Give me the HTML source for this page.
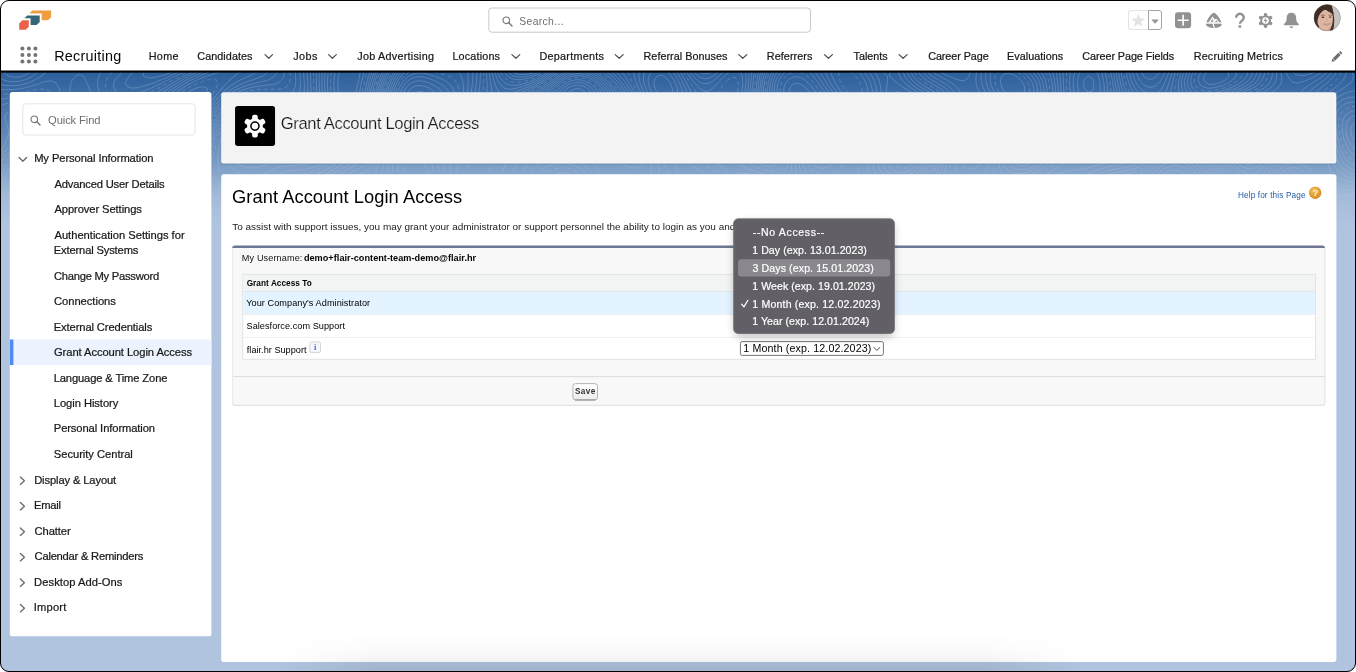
<!DOCTYPE html>
<html lang="en">
<head>
<meta charset="utf-8">
<title>Grant Account Login Access</title>
<style>
html,body{margin:0;padding:0;background:#fff;}
body{width:1356px;height:672px;overflow:hidden;font-family:"Liberation Sans",Arial,Helvetica,sans-serif;}
#frame{will-change:transform;position:relative;width:1356px;height:672px;overflow:hidden;background:#fff;}
#frame *{box-sizing:border-box;}
.abs{position:absolute;}
.t{position:absolute;white-space:nowrap;line-height:1;display:block;}
.t.sf{-webkit-text-stroke:0.22px currentColor;}
.t.dd{-webkit-text-stroke:0.2px currentColor;}
.t.lite{-webkit-text-stroke:0.18px #f3f3f3;}
#border{left:0;top:0;width:1356px;height:672px;border:1px solid #000;border-radius:9px;box-shadow:0 0 0 30px #fff;pointer-events:none;}
</style>
</head>
<body>
<div id="frame">
<svg class="abs" style="left:0;top:0" width="1356" height="672" viewBox="0 0 1356 672">
<defs>
<linearGradient id="bgg" x1="0" y1="0" x2="0" y2="1">
<stop offset="0" stop-color="#2c5f9c"/><stop offset="0.6" stop-color="#7b9cc4"/><stop offset="0.8" stop-color="#a2bad8"/><stop offset="1" stop-color="#b0c4df"/>
</linearGradient>
<linearGradient id="savg" x1="0" y1="0" x2="0" y2="1"><stop offset="0" stop-color="#fff"/><stop offset="1" stop-color="#ebebeb"/></linearGradient>
<radialGradient id="hg" cx="40%" cy="30%" r="70%"><stop offset="0" stop-color="#f7c362"/><stop offset="1" stop-color="#d98c1f"/></radialGradient>
<linearGradient id="fade" x1="0" y1="0" x2="0" y2="1"><stop offset="0" stop-color="#fff" stop-opacity="1"/><stop offset="0.55" stop-color="#fff" stop-opacity="0.8"/><stop offset="1" stop-color="#fff" stop-opacity="0"/></linearGradient>
<mask id="topomask"><rect x="0" y="72" width="1356" height="165" fill="url(#fade)"/></mask>
</defs>
<rect x="0" y="72" width="1356" height="600" fill="#b0c4df"/>
<rect x="0" y="72" width="1356" height="153.5" fill="url(#bgg)"/>
<g mask="url(#topomask)" fill="none" stroke="#cfe0f5" stroke-width="0.8" stroke-opacity="0.3"><path d="M339.6 72.0 L338.6 76.0 L338.0 80.0 L337.8 84.0 L338.0 88.0 L338.6 92.0 M355.9 92.0 L356.0 91.7 L356.9 88.0 L357.7 84.0 L358.6 80.0 L359.5 76.0 L360.0 73.4 L360.2 72.0 M335.2 72.0 L334.4 76.0 L334.0 80.0 L333.8 84.0 L334.0 88.0 L334.4 92.0 M359.5 92.0 L360.0 90.1 L360.4 88.0 L361.2 84.0 L362.1 80.0 L363.1 76.0 L364.0 72.1 L364.0 72.0 M328.3 72.0 L328.0 74.1 L327.8 76.0 L327.5 80.0 L327.5 84.0 L327.6 88.0 L327.9 92.0 M364.7 92.0 L365.5 88.0 L366.4 84.0 L367.4 80.0 L368.0 77.9 L368.5 76.0 L369.5 72.0 M660.0 75.2 L658.0 76.0 L656.0 77.2 L654.4 80.0 L654.0 84.0 L654.9 88.0 L656.0 90.3 L657.1 92.0 M672.5 92.0 L672.2 88.0 L672.0 87.4 L670.6 84.0 L668.3 80.0 L668.0 79.6 L664.0 76.1 L663.5 76.0 L660.0 75.2 M1168.0 171.5 L1167.0 172.0 L1164.0 174.1 M1184.0 174.1 L1182.2 172.0 L1180.0 170.8 L1176.0 169.9 L1172.0 170.2 L1168.0 171.5 M325.2 72.0 L324.8 76.0 L324.7 80.0 L324.7 84.0 L324.8 88.0 L325.1 92.0 M366.9 92.0 L367.7 88.0 L368.0 86.8 L368.6 84.0 L369.6 80.0 L370.7 76.0 L371.9 72.0 M522.3 72.0 L524.0 72.1 L525.2 72.0 M651.2 72.0 L648.9 76.0 L648.1 80.0 L648.5 84.0 L649.7 88.0 L651.5 92.0 L652.0 92.8 M678.0 92.0 L677.3 88.0 L676.0 84.3 L675.9 84.0 L673.8 80.0 L672.0 76.9 L671.3 76.0 L668.1 72.0 M1088.0 75.9 L1087.8 76.0 L1084.1 80.0 L1084.0 80.4 L1083.6 84.0 L1084.0 87.0 L1084.3 88.0 L1087.7 92.0 L1088.0 92.2 L1089.5 92.0 L1092.0 91.3 L1093.5 88.0 L1093.7 84.0 L1092.9 80.0 L1092.0 78.0 L1088.3 76.0 L1088.0 75.9 M1168.0 166.8 L1165.4 168.0 L1164.0 168.8 L1160.0 171.6 L1159.4 172.0 M1189.7 172.0 L1188.0 170.2 L1185.2 168.0 L1184.0 167.4 L1180.0 166.0 L1176.0 165.4 L1172.0 165.7 L1168.0 166.8 M322.3 72.0 L322.0 76.0 L321.9 80.0 L322.0 84.0 L322.1 88.0 L322.3 92.0 M236.0 163.3 L237.3 164.0 L240.0 165.4 L244.0 166.8 L248.0 167.6 L252.0 167.9 L256.0 167.6 L260.0 166.8 L264.0 165.6 L268.0 164.2 L268.5 164.0 M368.9 92.0 L369.7 88.0 L370.6 84.0 L371.7 80.0 L372.0 78.9 L372.8 76.0 L374.1 72.0 M512.6 72.0 L516.0 73.7 L520.0 74.5 L524.0 74.5 L528.0 73.9 L532.0 72.9 L534.4 72.0 M644.7 72.0 L644.0 74.1 L643.5 76.0 L643.5 80.0 L644.0 82.9 L644.2 84.0 L645.6 88.0 L647.5 92.0 L648.0 92.9 M682.5 92.0 L681.4 88.0 L680.0 84.3 L679.9 84.0 L677.9 80.0 L676.0 76.5 L675.7 76.0 L673.2 72.0 M1080.2 72.0 L1080.0 72.3 L1078.4 76.0 L1077.6 80.0 L1077.4 84.0 L1077.8 88.0 L1078.7 92.0 M1099.9 92.0 L1100.0 90.8 L1100.2 88.0 L1100.1 84.0 L1100.0 83.3 L1099.5 80.0 L1098.4 76.0 L1096.9 72.0 M1356.0 122.2 L1353.0 124.0 L1352.0 125.3 L1351.1 128.0 L1350.9 132.0 L1351.7 136.0 L1352.0 136.8 L1354.3 140.0 L1356.0 141.6 M1168.0 163.1 L1165.7 164.0 L1164.0 164.8 L1160.0 167.2 L1158.9 168.0 L1156.0 170.3 L1153.8 172.0 L1152.0 173.6 M1196.0 174.3 L1195.0 172.0 L1192.0 168.5 L1191.6 168.0 L1188.0 165.6 L1185.1 164.0 L1184.0 163.5 M10.4 176.0 L10.4 180.0 M319.3 72.0 L319.1 76.0 L319.1 80.0 L319.3 84.0 L319.4 88.0 L319.6 92.0 M226.8 164.0 L228.0 165.4 L231.1 168.0 L232.0 168.7 L236.0 171.1 L237.9 172.0 L240.0 173.1 L244.0 174.9 M264.0 173.9 L267.3 172.0 L268.0 171.7 L272.0 169.9 L276.0 168.3 L276.9 168.0 L280.0 167.1 L284.0 166.3 L288.0 165.8 L292.0 165.4 L296.0 165.2 L300.0 164.9 L304.0 164.5 L307.3 164.0 L308.0 163.9 M370.7 92.0 L371.6 88.0 L372.0 86.2 L372.5 84.0 L373.6 80.0 L374.8 76.0 L376.0 72.5 L376.2 72.0 M507.9 72.0 L508.0 72.1 L512.0 75.3 L513.8 76.0 L516.0 76.7 L520.0 77.1 L524.0 76.9 L528.0 76.1 L528.4 76.0 L532.0 74.9 L536.0 73.3 L538.8 72.0 M639.1 72.0 L638.8 76.0 L639.3 80.0 L640.0 82.5 L640.4 84.0 L642.0 88.0 L643.9 92.0 L644.0 92.1 M686.6 92.0 L685.3 88.0 L684.0 85.1 L683.5 84.0 L681.5 80.0 L680.0 77.3 L679.3 76.0 L677.0 72.0 M1074.9 72.0 L1073.8 76.0 L1073.3 80.0 L1073.2 84.0 L1073.5 88.0 L1074.1 92.0 M1104.3 92.0 L1104.3 88.0 L1104.0 84.0 L1104.0 84.0 L1103.4 80.0 L1102.7 76.0 L1101.6 72.0 M1207.2 72.0 L1204.0 75.8 L1203.9 76.0 L1203.6 80.0 L1204.0 80.7 L1208.0 84.0 L1208.0 84.0 L1212.0 84.4 L1215.6 84.0 L1216.0 83.9 L1220.0 82.5 L1224.0 80.7 L1225.3 80.0 L1228.0 77.0 L1228.9 76.0 L1228.3 72.0 M1356.0 115.7 L1354.3 116.0 L1352.0 116.7 L1348.0 120.0 L1348.0 120.1 L1346.4 124.0 L1345.9 128.0 L1346.1 132.0 L1346.8 136.0 L1348.0 140.0 L1348.0 140.0 L1350.2 144.0 L1352.0 146.6 L1353.9 148.0 L1356.0 149.2 M9.1 168.0 L8.0 169.7 L6.9 172.0 L5.9 176.0 L5.8 180.0 L6.7 184.0 L8.0 186.9 L8.8 188.0 M211.6 200.0 L212.0 196.8 L212.1 196.0 L212.0 194.5 L211.8 192.0 M1200.0 173.0 L1199.6 172.0 L1196.4 168.0 L1196.0 167.7 L1192.0 164.5 L1191.3 164.0 M1160.0 163.4 L1159.2 164.0 L1156.0 166.2 L1153.7 168.0 L1152.0 169.3 L1148.4 172.0 L1148.0 172.3 M316.4 72.0 L316.3 76.0 L316.4 80.0 L316.5 84.0 L316.7 88.0 L316.9 92.0 M221.8 136.0 L220.4 140.0 L220.0 141.7 L219.4 144.0 L218.6 148.0 L218.1 152.0 L217.8 156.0 L217.8 160.0 L218.0 164.0 L218.6 168.0 L219.7 172.0 L220.0 172.9 M280.0 173.7 L284.0 172.3 L285.0 172.0 L288.0 171.3 L292.0 170.7 L296.0 170.2 L300.0 169.8 L304.0 169.3 L308.0 168.6 L310.6 168.0 L312.0 167.6 L316.0 166.3 L320.0 164.6 L321.3 164.0 M372.6 92.0 L373.4 88.0 L374.3 84.0 L375.5 80.0 L376.0 78.4 L376.8 76.0 L378.1 72.0 M504.2 72.0 L507.5 76.0 L508.0 76.5 L512.0 78.7 L516.0 79.6 L520.0 79.6 L524.0 79.1 L528.0 78.2 L532.0 76.9 L534.2 76.0 L536.0 75.3 L540.0 73.3 L542.3 72.0 M633.6 72.0 L634.2 76.0 L635.3 80.0 L636.0 81.8 L636.8 84.0 L638.6 88.0 L640.0 90.7 L640.7 92.0 M690.8 92.0 L689.2 88.0 L688.0 85.8 L687.1 84.0 L684.9 80.0 L684.0 78.5 L682.6 76.0 L680.4 72.0 M1070.6 72.0 L1069.9 76.0 L1069.6 80.0 L1069.7 84.0 L1069.9 88.0 L1070.4 92.0 M1107.9 92.0 L1107.6 88.0 L1107.2 84.0 L1106.6 80.0 L1106.0 76.0 L1105.2 72.0 M1201.1 72.0 L1200.0 73.8 L1198.8 76.0 L1198.2 80.0 L1199.5 84.0 L1200.0 84.6 L1204.0 87.2 L1207.3 88.0 L1208.0 88.1 L1212.0 88.0 L1212.2 88.0 L1216.0 87.3 L1220.0 86.2 L1224.0 84.8 L1226.2 84.0 L1228.0 83.0 L1232.0 80.5 L1232.7 80.0 L1236.0 76.0 L1236.0 76.0 L1236.4 72.0 M1356.0 110.8 L1352.0 111.2 L1350.0 112.0 L1348.0 113.0 L1344.9 116.0 L1344.0 117.5 L1342.9 120.0 L1342.2 124.0 L1342.1 128.0 L1342.5 132.0 L1343.2 136.0 L1344.0 139.3 L1344.2 140.0 L1345.7 144.0 L1347.6 148.0 L1348.0 148.8 L1350.7 152.0 L1352.0 153.3 L1356.0 155.2 M8.0 163.3 L7.5 164.0 L4.9 168.0 L4.0 170.1 L3.3 172.0 L2.5 176.0 L2.4 180.0 L3.0 184.0 L4.0 187.3 L4.3 188.0 L7.0 192.0 L8.0 193.1 M210.8 212.0 L212.0 209.6 L212.8 208.0 L214.8 204.0 L216.0 201.0 L216.5 200.0 L218.0 196.0 L219.0 192.0 L219.5 188.0 L219.4 184.0 L218.6 180.0 L216.0 177.1 L213.2 176.0 L212.0 175.8 M1204.0 172.7 L1203.7 172.0 L1200.5 168.0 L1200.0 167.5 L1196.0 164.0 L1196.0 164.0 M1153.9 164.0 L1152.0 165.4 L1148.6 168.0 L1148.0 168.4 L1144.0 171.1 L1142.5 172.0 L1140.0 173.4 M310.3 72.0 L310.4 76.0 L310.6 80.0 L310.8 84.0 L311.0 88.0 L311.0 92.0 M220.1 128.0 L220.0 128.2 L218.1 132.0 L216.3 136.0 L216.0 136.9 L214.7 140.0 L213.2 144.0 L212.0 147.2 L211.7 148.0 M497.9 72.0 L499.4 76.0 L500.0 77.3 L501.8 80.0 L504.0 82.4 L506.8 84.0 L508.0 84.6 L512.0 85.4 L516.0 85.3 L520.0 84.7 L522.6 84.0 L524.0 83.7 L528.0 82.4 L532.0 80.8 L533.8 80.0 L536.0 79.0 L540.0 77.0 L541.7 76.0 L544.0 74.7 L548.0 72.2 L548.2 72.0 M621.8 72.0 L624.0 74.7 L624.8 76.0 L627.4 80.0 L628.0 80.9 L629.8 84.0 L632.0 87.8 L632.1 88.0 L634.5 92.0 M741.7 92.0 L742.4 88.0 L742.7 84.0 L742.6 80.0 L742.1 76.0 L740.8 72.0 M729.3 72.0 L728.0 72.9 L724.7 76.0 L724.0 76.6 L720.7 80.0 L720.0 80.8 L716.8 84.0 L716.0 85.0 L712.7 88.0 L712.0 88.9 L708.0 91.4 L704.0 91.1 L700.0 88.3 L699.8 88.0 L696.0 84.6 L695.6 84.0 L692.1 80.0 L692.0 79.8 L689.3 76.0 L688.0 74.0 L686.8 72.0 M1063.2 72.0 L1063.1 76.0 L1063.3 80.0 L1063.5 84.0 L1063.7 88.0 L1064.0 92.0 L1064.0 92.0 M1114.1 92.0 L1113.5 88.0 L1112.9 84.0 L1112.3 80.0 L1112.0 78.2 L1111.7 76.0 L1111.0 72.0 M1193.3 72.0 L1192.0 74.8 L1191.5 76.0 L1190.8 80.0 L1191.0 84.0 L1192.0 86.9 L1192.5 88.0 L1196.0 91.4 L1197.2 92.0 M1216.0 92.4 L1217.6 92.0 L1220.0 91.3 L1224.0 90.1 L1228.0 88.8 L1230.2 88.0 L1232.0 87.2 L1236.0 85.3 L1238.7 84.0 L1240.0 83.0 L1244.0 80.0 L1244.0 80.0 L1246.8 76.0 L1247.8 72.0 M1356.0 101.9 L1352.0 101.9 L1348.0 102.7 L1344.9 104.0 L1344.0 104.4 L1340.0 107.5 L1339.5 108.0 L1336.9 112.0 L1336.0 114.7 L1335.6 116.0 M1335.7 128.0 L1336.0 130.1 L1336.3 132.0 L1337.1 136.0 L1338.1 140.0 L1339.1 144.0 L1340.0 147.0 L1340.3 148.0 L1341.8 152.0 L1343.6 156.0 L1344.0 156.8 L1346.4 160.0 L1348.0 161.8 L1351.4 164.0 L1352.0 164.3 L1356.0 165.2 M0.0 193.9 L1.1 196.0 L4.0 200.0 L4.0 200.0 L8.0 202.7 M9.5 152.0 L8.0 153.2 L5.5 156.0 L4.0 157.7 L2.5 160.0 L0.2 164.0 L0.0 164.5 M4.0 240.0 L1.7 236.0 L0.0 233.4 M212.0 220.8 L212.4 220.0 L214.7 216.0 L216.0 213.9 L217.4 212.0 L220.0 208.6 L220.6 208.0 M316.0 174.1 L320.0 172.6 L321.5 172.0 L324.0 170.8 L328.0 168.8 L329.4 168.0 L332.0 166.4 L336.0 164.0 L336.0 164.0 M376.0 92.0 L376.0 92.0 L376.8 88.0 L377.8 84.0 L379.1 80.0 L380.0 77.3 L380.5 76.0 L382.0 72.0 M1212.0 173.5 L1211.2 172.0 L1208.0 168.0 L1208.0 168.0 L1204.0 164.2 L1203.8 164.0 M1144.0 163.5 L1143.3 164.0 L1140.0 166.0 L1136.0 168.0 L1136.0 168.0 L1132.0 169.4 L1128.0 170.4 L1124.0 171.1 L1120.0 171.8 L1118.6 172.0 L1116.0 172.4 L1112.0 173.2 L1108.0 174.3 M307.0 72.0 L307.2 76.0 L307.5 80.0 L307.8 84.0 L307.9 88.0 L307.8 92.0 M220.0 123.8 L219.9 124.0 L217.6 128.0 L216.0 131.2 L215.6 132.0 L213.7 136.0 L212.0 139.9 L212.0 140.0 M495.0 72.0 L496.0 76.0 L496.0 76.1 L497.6 80.0 L499.8 84.0 L500.0 84.3 L504.0 87.8 L504.6 88.0 L508.0 89.1 L512.0 89.1 L516.0 88.4 L517.2 88.0 L520.0 87.3 L524.0 86.1 L528.0 84.5 L529.2 84.0 L532.0 82.8 L536.0 80.9 L537.7 80.0 L540.0 78.8 L544.0 76.4 L544.7 76.0 L548.0 73.9 L550.9 72.0 M616.1 72.0 L620.0 75.8 L620.2 76.0 L623.5 80.0 L624.0 80.6 L626.4 84.0 L628.0 86.4 L629.0 88.0 L631.5 92.0 L632.0 92.8 M744.9 92.0 L745.4 88.0 L745.8 84.0 L746.0 80.0 L745.9 76.0 L745.6 72.0 M723.1 72.0 L720.0 75.1 L719.0 76.0 L716.0 78.8 L714.4 80.0 L712.0 81.8 L708.0 83.5 L704.0 83.7 L700.0 82.2 L697.1 80.0 L696.0 79.2 L693.2 76.0 L692.0 74.6 L690.2 72.0 M1059.7 72.0 L1059.9 76.0 L1060.0 76.6 L1060.3 80.0 L1060.6 84.0 L1060.9 88.0 L1061.1 92.0 M1117.1 92.0 L1116.2 88.0 L1116.0 86.7 L1115.5 84.0 L1114.8 80.0 L1114.2 76.0 L1113.6 72.0 M1190.1 72.0 L1188.5 76.0 L1188.0 78.3 L1187.7 80.0 L1187.6 84.0 L1188.0 85.8 L1188.6 88.0 L1191.2 92.0 L1192.0 92.7 M1224.0 92.3 L1225.1 92.0 L1228.0 91.0 L1232.0 89.6 L1236.0 88.1 L1236.2 88.0 L1240.0 86.1 L1244.0 84.0 L1244.0 84.0 L1248.0 80.8 L1248.9 80.0 L1251.5 76.0 L1252.0 73.9 L1252.4 72.0 M1356.0 97.1 L1352.0 97.1 L1348.0 97.8 L1344.0 99.2 L1342.5 100.0 L1340.0 101.5 L1337.0 104.0 L1336.0 105.1 M1336.0 143.2 L1336.2 144.0 L1337.2 148.0 L1338.4 152.0 L1339.7 156.0 L1340.0 156.7 L1341.6 160.0 L1344.0 163.7 L1344.3 164.0 L1348.0 167.3 L1349.5 168.0 L1352.0 169.1 L1356.0 169.7 M0.0 201.4 L2.0 204.0 L4.0 206.1 L8.0 207.5 M8.0 147.4 L7.5 148.0 L4.2 152.0 L4.0 152.2 L1.5 156.0 L0.0 158.3 M6.5 240.0 L4.8 236.0 L4.0 234.2 L2.8 232.0 L0.2 228.0 L0.0 227.7 M211.2 228.0 L212.0 226.0 L212.9 224.0 L215.0 220.0 L216.0 218.3 L217.7 216.0 L220.0 213.0 L221.0 212.0 M324.0 174.5 L328.0 172.5 L328.9 172.0 L332.0 170.3 L336.0 168.0 L336.0 168.0 L340.0 165.6 L342.6 164.0 L344.0 163.1 M377.6 92.0 L378.5 88.0 L379.5 84.0 L380.0 82.6 L380.8 80.0 L382.3 76.0 L383.9 72.0 M1216.0 174.2 L1214.8 172.0 L1212.0 168.6 L1211.6 168.0 L1208.0 164.6 L1207.4 164.0 M1136.4 164.0 L1136.0 164.2 L1132.0 165.7 L1128.0 166.9 L1124.0 167.7 L1122.5 168.0 L1120.0 168.4 L1116.0 169.0 L1112.0 169.7 L1108.0 170.7 L1104.0 171.9 L1103.7 172.0 L1100.0 173.4 M143.0 72.0 L143.4 76.0 L144.0 76.5 L148.0 77.9 L152.0 77.8 L156.0 77.2 L160.0 76.3 L160.8 76.0 L164.0 75.0 L168.0 73.6 L172.0 72.1 L172.2 72.0 M303.5 72.0 L303.8 76.0 L304.0 78.3 L304.1 80.0 L304.3 84.0 L304.4 88.0 L304.1 92.0 L304.0 92.8 M220.0 119.9 L219.9 120.0 L217.4 124.0 L216.0 126.5 L215.2 128.0 L213.1 132.0 L212.0 134.3 L211.2 136.0 M492.1 72.0 L492.8 76.0 L493.8 80.0 L495.1 84.0 L496.0 86.7 L496.7 88.0 L499.1 92.0 M515.1 92.0 L516.0 91.7 L520.0 90.2 L524.0 88.5 L525.1 88.0 L528.0 86.8 L532.0 84.9 L533.6 84.0 L536.0 82.8 L540.0 80.6 L541.0 80.0 L544.0 78.2 L547.5 76.0 L548.0 75.7 L552.0 73.0 L553.5 72.0 M611.1 72.0 L612.0 72.7 L615.8 76.0 L616.0 76.2 L619.7 80.0 L620.0 80.4 L622.9 84.0 L624.0 85.4 L625.8 88.0 L628.0 91.2 L628.5 92.0 M747.5 92.0 L748.0 88.6 L748.1 88.0 L748.4 84.0 L748.7 80.0 L748.8 76.0 L748.9 72.0 M717.9 72.0 L716.0 73.8 L712.9 76.0 L712.0 76.7 L708.0 78.4 L704.0 78.6 L700.0 77.2 L698.4 76.0 L696.0 74.2 L694.1 72.0 M1056.1 72.0 L1056.8 76.0 L1057.3 80.0 L1057.8 84.0 L1058.1 88.0 L1058.3 92.0 M1120.0 92.1 L1120.0 92.0 L1119.0 88.0 L1118.1 84.0 L1117.4 80.0 L1116.7 76.0 L1116.2 72.0 M1187.1 72.0 L1185.6 76.0 L1184.7 80.0 L1184.5 84.0 L1185.1 88.0 L1186.7 92.0 M1231.4 92.0 L1232.0 91.8 L1236.0 90.3 L1240.0 88.8 L1241.9 88.0 L1244.0 86.9 L1248.0 84.7 L1249.1 84.0 L1252.0 81.4 L1253.5 80.0 L1255.8 76.0 L1256.0 75.3 L1256.7 72.0 M1356.0 91.1 L1352.0 91.3 L1349.4 92.0 L1348.0 92.3 L1344.0 93.8 L1340.0 95.9 L1339.8 96.0 L1336.0 98.6 M1336.0 155.8 L1336.1 156.0 L1337.3 160.0 L1339.2 164.0 L1340.0 165.3 L1342.1 168.0 L1344.0 169.8 L1347.5 172.0 L1348.0 172.2 L1352.0 173.5 L1356.0 173.9 M1296.0 174.8 L1292.0 174.0 M9.0 240.0 L8.0 237.0 L7.6 236.0 L6.2 232.0 L4.8 228.0 L4.0 225.0 L3.5 224.0 L2.0 220.0 L0.7 216.0 L4.0 215.2 L8.0 213.5 M8.0 111.6 L7.4 112.0 L5.1 116.0 L5.3 120.0 L6.6 124.0 L7.8 128.0 L8.0 129.0 L8.6 132.0 L8.1 136.0 L8.0 136.2 L6.8 140.0 L4.7 144.0 L4.0 145.0 L2.4 148.0 L0.0 152.0 L0.0 152.1 M211.9 232.0 L212.0 231.6 L213.3 228.0 L215.2 224.0 L216.0 222.6 L217.6 220.0 L220.0 216.8 L220.8 216.0 M332.0 174.0 L335.7 172.0 L336.0 171.8 L340.0 169.6 L342.8 168.0 L344.0 167.3 L348.0 165.0 L349.8 164.0 M379.3 92.0 L380.0 88.7 L380.2 88.0 L381.3 84.0 L382.6 80.0 L384.0 76.2 L384.1 76.0 L385.8 72.0 M1220.0 174.8 L1218.3 172.0 L1216.0 169.2 L1215.0 168.0 L1212.0 165.1 L1210.8 164.0 M1124.0 164.0 L1123.8 164.0 L1120.0 164.6 L1116.0 165.3 L1112.0 166.0 L1108.0 166.9 L1104.0 167.9 L1103.7 168.0 L1100.0 169.1 L1096.0 170.6 L1092.6 172.0 L1092.0 172.3 L1088.0 174.2 M133.0 72.0 L132.0 73.2 L129.3 76.0 L128.0 77.9 L126.4 80.0 L125.4 84.0 L128.0 87.0 L131.3 88.0 L132.0 88.1 L133.4 88.0 L136.0 87.8 L140.0 87.0 L144.0 85.9 L148.0 84.8 L150.4 84.0 L152.0 83.5 L156.0 81.9 L160.0 80.4 L160.9 80.0 L164.0 78.6 L168.0 76.9 L169.8 76.0 L172.0 75.0 L176.0 73.2 L178.4 72.0 M299.6 72.0 L300.0 75.8 L300.0 76.0 L300.3 80.0 L300.4 84.0 L300.3 88.0 L300.0 89.8 L299.5 92.0 M220.2 116.0 L220.0 116.3 L217.5 120.0 L216.0 122.4 L215.0 124.0 L212.8 128.0 L212.0 129.5 M489.3 72.0 L489.8 76.0 L490.3 80.0 L490.9 84.0 L491.5 88.0 L491.9 92.0 M522.3 92.0 L524.0 91.2 L528.0 89.1 L530.0 88.0 L532.0 87.0 L536.0 84.8 L537.3 84.0 L540.0 82.5 L544.0 80.0 L544.0 80.0 L548.0 77.5 L550.1 76.0 L552.0 74.8 L556.0 72.1 L556.2 72.0 M606.7 72.0 L608.0 73.0 L611.8 76.0 L612.0 76.2 L616.0 80.0 L616.0 80.0 L619.6 84.0 L620.0 84.5 L622.7 88.0 L624.0 89.8 L625.5 92.0 M749.8 92.0 L750.3 88.0 L750.7 84.0 L751.0 80.0 L751.4 76.0 L751.7 72.0 M711.7 72.0 L708.0 73.6 L704.0 73.8 L700.0 72.4 L699.5 72.0 M1052.5 72.0 L1053.6 76.0 L1054.4 80.0 L1054.9 84.0 L1055.3 88.0 L1055.5 92.0 M1123.0 92.0 L1121.7 88.0 L1120.7 84.0 L1120.0 80.7 L1119.9 80.0 L1119.2 76.0 L1118.6 72.0 M1184.2 72.0 L1184.0 72.5 L1182.8 76.0 L1181.9 80.0 L1181.5 84.0 L1181.7 88.0 L1182.7 92.0 M1236.0 92.5 L1237.4 92.0 L1240.0 91.0 L1244.0 89.5 L1247.5 88.0 L1248.0 87.7 L1252.0 85.3 L1254.0 84.0 L1256.0 82.1 L1257.9 80.0 L1260.0 76.0 L1260.0 75.9 L1260.8 72.0 M1352.3 72.0 L1353.3 76.0 L1352.9 80.0 L1352.0 81.0 L1349.6 84.0 L1348.0 84.9 L1344.0 87.6 L1343.5 88.0 L1340.0 90.1 L1337.2 92.0 L1336.0 92.8 M1334.2 164.0 L1336.0 167.8 L1336.1 168.0 L1339.3 172.0 L1340.0 172.6 L1344.0 175.2 L1345.7 176.0 L1348.0 176.8 L1352.0 177.7 L1356.0 177.9 M962.7 164.0 L964.0 166.2 L966.8 168.0 L968.0 168.6 L972.0 168.7 L974.3 168.0 L976.0 167.5 L980.0 164.8 L980.7 164.0 M0.0 131.0 L0.3 132.0 L0.9 136.0 L0.6 140.0 L0.0 142.0 M1292.0 167.6 L1289.9 168.0 L1288.0 168.5 L1284.0 170.9 L1282.8 172.0 M1304.0 172.0 L1304.0 172.0 L1300.0 169.3 L1296.6 168.0 L1296.0 167.8 L1292.0 167.6 M10.3 236.0 L9.3 232.0 L8.7 228.0 L8.7 224.0 L9.8 220.0 M8.0 103.2 L4.8 104.0 L4.0 104.3 L0.0 106.3 M211.7 240.0 L212.0 238.6 L212.6 236.0 L213.8 232.0 L215.4 228.0 L216.0 226.8 L217.6 224.0 L220.0 220.4 L220.4 220.0 M340.0 173.4 L342.8 172.0 L344.0 171.3 L348.0 169.3 L350.6 168.0 L352.0 167.2 L356.0 165.0 L357.7 164.0 M380.9 92.0 L381.8 88.0 L383.0 84.0 L384.0 80.9 L384.3 80.0 L385.9 76.0 L387.7 72.0 M1221.8 172.0 L1220.0 169.9 L1218.4 168.0 L1216.0 165.7 L1214.2 164.0 M1104.0 163.5 L1102.2 164.0 L1100.0 164.5 L1096.0 165.6 L1092.0 166.7 L1088.0 167.9 L1087.4 168.0 L1084.0 168.9 L1080.0 169.7 L1076.0 170.2 L1072.0 170.6 L1068.0 171.1 L1064.0 172.0 L1064.0 172.0 L1060.0 173.2 L1056.0 174.6 M122.9 72.0 L120.0 74.5 L118.3 76.0 L116.0 78.8 L115.1 80.0 L113.7 84.0 L113.9 88.0 L116.0 91.8 L116.2 92.0 M140.0 92.4 L141.2 92.0 L144.0 91.0 L148.0 89.4 L151.4 88.0 L152.0 87.8 L156.0 85.9 L160.0 84.0 L160.1 84.0 L164.0 82.0 L167.9 80.0 L168.0 80.0 L172.0 77.9 L175.6 76.0 L176.0 75.8 L180.0 73.8 L183.5 72.0 M295.3 72.0 L295.6 76.0 L295.8 80.0 L295.7 84.0 L294.8 88.0 L292.6 92.0 L292.0 92.6 M268.0 92.7 L264.0 92.5 L260.0 92.4 L256.0 92.7 M220.7 112.0 L220.0 112.9 L217.7 116.0 L216.0 118.5 L215.0 120.0 L212.6 124.0 L212.0 125.1 M486.5 72.0 L486.7 76.0 L486.9 80.0 L487.2 84.0 L487.2 88.0 L487.0 92.0 M527.4 92.0 L528.0 91.7 L532.0 89.3 L534.0 88.0 L536.0 86.9 L540.0 84.4 L540.6 84.0 L544.0 81.9 L546.8 80.0 L548.0 79.2 L552.0 76.5 L552.8 76.0 L556.0 73.8 L558.9 72.0 M602.6 72.0 L604.0 73.0 L608.0 76.0 L608.0 76.0 L612.0 79.5 L612.5 80.0 L616.0 83.7 L616.3 84.0 L619.6 88.0 L620.0 88.6 L622.5 92.0 M673.3 164.0 L676.0 167.5 L676.4 168.0 L678.2 172.0 M704.0 172.5 L703.2 172.0 L700.0 170.4 L696.0 168.2 L695.6 168.0 L692.0 165.7 L690.1 164.0 M752.0 92.0 L752.0 91.9 L752.4 88.0 L752.8 84.0 L753.2 80.0 L753.6 76.0 L754.1 72.0 M1048.8 72.0 L1050.3 76.0 L1051.4 80.0 L1052.0 83.4 L1052.1 84.0 L1052.5 88.0 L1052.7 92.0 M1062.3 164.0 L1060.0 165.3 L1056.3 168.0 L1056.0 168.2 L1052.0 170.9 L1050.4 172.0 L1048.0 173.3 M1181.4 72.0 L1180.0 76.0 L1180.0 76.0 L1179.0 80.0 L1178.5 84.0 L1178.4 88.0 L1178.9 92.0 M1243.5 92.0 L1244.0 91.8 L1248.0 90.2 L1252.0 88.5 L1253.0 88.0 L1256.0 86.1 L1258.8 84.0 L1260.0 82.7 L1262.2 80.0 L1264.0 76.1 L1264.0 76.0 L1264.7 72.0 M1346.2 72.0 L1345.4 76.0 L1344.0 78.8 L1343.3 80.0 L1340.0 83.6 L1339.6 84.0 L1336.0 86.9 L1334.7 88.0 L1332.0 90.0 L1329.6 92.0 M1328.6 164.0 L1329.2 168.0 L1331.1 172.0 L1332.0 173.0 M1336.0 176.5 L1340.0 178.7 L1343.2 180.0 L1344.0 180.3 L1348.0 181.2 L1352.0 181.8 L1356.0 181.8 M955.4 164.0 L955.5 168.0 L955.9 172.0 L956.0 172.4 M984.0 173.9 L984.9 172.0 L986.8 168.0 L988.0 165.4 L988.5 164.0 M760.0 163.6 L760.9 164.0 L764.0 165.1 L768.0 166.0 L772.0 165.9 L776.0 164.4 L776.4 164.0 M1288.0 163.8 L1287.5 164.0 L1284.0 165.7 L1280.8 168.0 L1280.0 168.8 L1277.3 172.0 L1276.0 174.1 M1313.1 172.0 L1312.0 171.1 L1308.5 168.0 L1308.0 167.7 L1304.0 165.5 L1300.4 164.0 L1300.0 163.9 L1296.0 163.1 L1292.0 163.0 L1288.0 163.8 M8.0 98.1 L4.0 98.7 L0.0 99.4 M213.4 240.0 L214.4 236.0 L215.8 232.0 L216.0 231.4 L217.6 228.0 L220.0 224.0 L220.0 224.0 M348.0 173.6 L351.6 172.0 L352.0 171.8 L356.0 170.1 L360.0 168.1 L360.2 168.0 L364.0 165.6 L365.8 164.0 M382.6 92.0 L383.5 88.0 L384.0 86.2 L384.7 84.0 L386.1 80.0 L387.8 76.0 L388.0 75.5 L389.7 72.0 M1225.3 172.0 L1224.0 170.5 L1221.9 168.0 L1220.0 166.3 L1217.6 164.0 M1126.1 92.0 L1124.6 88.0 L1124.0 86.2 L1123.4 84.0 L1122.5 80.0 L1121.7 76.0 L1121.1 72.0 M101.2 72.0 L100.0 73.8 L98.7 76.0 L97.7 80.0 L97.6 84.0 L98.1 88.0 L99.3 92.0 M156.0 92.8 L157.4 92.0 L160.0 90.6 L164.0 88.3 L164.5 88.0 L168.0 85.9 L171.1 84.0 L172.0 83.5 L176.0 81.1 L177.7 80.0 L180.0 78.7 L184.0 76.5 L184.8 76.0 L188.0 74.4 L192.0 72.3 L192.6 72.0 M284.3 72.0 L284.0 74.2 L283.7 76.0 L281.8 80.0 L280.0 81.7 L276.0 83.7 L274.9 84.0 L272.0 84.5 L268.0 85.0 L264.0 85.5 L260.0 86.0 L256.0 86.6 L252.0 87.3 L249.5 88.0 L248.0 88.3 L244.0 89.5 L240.0 91.1 L238.3 92.0 M220.0 106.3 L218.6 108.0 L216.0 111.3 L215.5 112.0 L212.7 116.0 L212.0 117.1 M480.5 72.0 L480.4 76.0 L480.2 80.0 L480.0 83.2 L479.9 84.0 L479.5 88.0 L478.8 92.0 M457.9 164.0 L457.2 168.0 L456.7 172.0 M594.5 72.0 L596.0 72.8 L600.0 75.3 L600.9 76.0 L604.0 78.4 L605.9 80.0 L608.0 82.0 L610.0 84.0 L612.0 86.2 L613.5 88.0 L616.0 91.3 L616.6 92.0 M657.4 164.0 L658.8 168.0 L659.5 172.0 M726.3 172.0 L724.6 168.0 L724.0 167.7 L720.0 165.6 L716.3 164.0 L716.0 163.9 M739.2 164.0 L740.0 164.5 L744.0 166.9 L746.0 168.0 L748.0 168.7 L752.0 170.1 L756.0 171.6 L757.2 172.0 L760.0 172.9 L764.0 174.1 M784.0 172.8 L784.6 172.0 L786.8 168.0 L787.9 164.0 L788.0 163.6 M756.0 92.0 L756.0 91.6 L756.3 88.0 L756.7 84.0 L757.2 80.0 L757.8 76.0 L758.5 72.0 M940.2 72.0 L944.0 73.9 L948.0 75.8 L948.5 76.0 L952.0 77.5 L956.0 79.0 L959.1 80.0 L960.0 80.4 L964.0 80.8 L965.5 80.0 L968.0 78.1 L969.0 76.0 L970.6 72.0 M1041.0 72.0 L1043.5 76.0 L1044.0 77.2 L1045.2 80.0 L1046.2 84.0 L1046.8 88.0 L1047.0 92.0 M1047.0 164.0 L1044.0 166.9 L1042.9 168.0 L1040.0 170.0 L1036.5 172.0 L1036.0 172.2 L1032.0 173.8 M1004.0 173.7 L1001.9 172.0 L1000.0 168.9 L999.6 168.0 L998.9 164.0 M946.8 164.0 L945.7 168.0 L944.4 172.0 L944.0 173.2 M1175.6 72.0 L1174.2 76.0 L1173.0 80.0 L1172.2 84.0 L1172.0 85.0 L1171.4 88.0 L1170.8 92.0 M1133.3 92.0 L1132.0 90.0 L1131.0 88.0 L1129.3 84.0 L1128.0 80.1 L1128.0 80.0 L1127.0 76.0 L1126.3 72.0 M1336.5 72.0 L1336.0 73.0 L1334.1 76.0 L1332.0 78.4 L1330.4 80.0 L1328.0 82.1 L1325.7 84.0 L1324.0 85.3 L1320.6 88.0 L1320.0 88.5 L1316.2 92.0 L1316.0 92.3 M1276.0 163.0 L1275.0 164.0 L1272.0 167.3 L1271.4 168.0 L1268.5 172.0 L1268.0 173.0 M1232.9 172.0 L1232.0 171.1 L1229.1 168.0 L1228.0 167.1 L1224.6 164.0 L1224.0 163.6 M1256.0 92.1 L1256.4 92.0 L1260.0 90.3 L1264.0 88.1 L1264.1 88.0 L1268.0 84.6 L1268.6 84.0 L1271.1 80.0 L1272.0 76.7 L1272.2 76.0 L1272.4 72.0 M60.3 92.0 L60.0 90.9 L59.0 88.0 L56.7 84.0 L56.0 83.1 L52.0 81.0 L48.0 81.1 L44.0 82.0 L40.0 83.3 L38.0 84.0 L36.0 84.6 L32.0 85.9 L28.0 87.0 L24.0 88.0 L24.0 88.0 L20.0 88.7 L16.0 89.3 L12.0 89.6 L8.0 89.7 L4.0 89.7 L0.0 89.4 M216.9 240.0 L218.1 236.0 L219.7 232.0 L220.0 231.5 M374.9 172.0 L376.0 170.3 L377.1 168.0 L378.6 164.0 M386.0 92.0 L386.9 88.0 L388.0 84.6 L388.2 84.0 L389.8 80.0 L391.7 76.0 L392.0 75.3 L393.9 72.0 M502.7 172.0 L503.7 168.0 L504.0 167.5 L505.9 164.0 M535.3 92.0 L536.0 91.6 L540.0 88.7 L540.9 88.0 L544.0 85.9 L546.5 84.0 L548.0 83.0 L552.0 80.1 L552.2 80.0 L556.0 77.4 L558.1 76.0 L560.0 74.8 L564.0 72.5 L565.0 72.0 M1336.0 189.8 L1340.0 189.8 L1344.0 190.0 L1348.0 190.1 L1352.0 190.1 L1356.0 189.9 M46.3 72.0 L44.0 74.0 L41.8 76.0 L40.0 77.1 L36.0 79.5 L35.0 80.0 L32.0 81.4 L28.0 82.9 L24.4 84.0 L24.0 84.1 L20.0 85.0 L16.0 85.5 L12.0 85.7 L8.0 85.6 L4.0 85.2 L0.0 84.2 M277.0 72.0 L276.0 74.0 L274.7 76.0 L272.0 78.1 L268.2 80.0 L268.0 80.1 L264.0 81.1 L260.0 82.1 L256.0 83.0 L252.2 84.0 L252.0 84.0 L248.0 85.1 L244.0 86.4 L240.2 88.0 L240.0 88.1 L236.0 90.0 L232.8 92.0 L232.0 92.5 M220.0 103.0 L219.1 104.0 L216.0 107.8 L215.8 108.0 L212.9 112.0 L212.0 113.3 M477.0 72.0 L476.8 76.0 L476.6 80.0 L476.3 84.0 L476.0 86.1 L475.7 88.0 L475.1 92.0 M450.5 164.0 L450.2 168.0 L450.2 172.0 M589.9 72.0 L592.0 72.9 L596.0 75.1 L597.4 76.0 L600.0 77.9 L602.7 80.0 L604.0 81.2 L607.0 84.0 L608.0 85.1 L610.6 88.0 L612.0 89.9 L613.6 92.0 M650.7 164.0 L651.2 168.0 L650.5 172.0 M620.0 174.4 L616.0 174.1 M736.0 174.6 L740.0 173.3 L744.0 173.2 L748.0 173.6 L752.0 174.4 M790.7 172.0 L791.5 168.0 L791.9 164.0 M757.9 92.0 L758.2 88.0 L758.6 84.0 L759.1 80.0 L759.8 76.0 L760.0 75.1 L760.7 72.0 M932.9 72.0 L936.0 74.2 L939.0 76.0 L940.0 76.5 L944.0 78.6 L946.7 80.0 L948.0 80.8 L952.0 83.2 L953.3 84.0 L956.0 86.3 L957.8 88.0 L960.0 91.7 L960.2 92.0 M943.4 164.0 L942.1 168.0 L940.5 172.0 L940.0 173.2 M1036.9 72.0 L1039.9 76.0 L1040.0 76.3 L1041.9 80.0 L1043.2 84.0 L1043.9 88.0 L1044.0 90.9 L1044.0 92.0 L1044.0 92.7 M1041.8 164.0 L1040.0 165.6 L1037.1 168.0 L1036.0 168.7 L1032.0 170.6 L1028.3 172.0 L1028.0 172.1 L1024.0 172.9 L1020.0 173.3 L1016.0 173.1 L1012.0 172.4 L1011.0 172.0 L1008.0 170.3 L1005.5 168.0 L1004.0 164.8 L1003.7 164.0 M980.0 92.4 L979.6 92.0 L977.3 88.0 L976.2 84.0 L976.0 81.5 L975.9 80.0 L976.0 77.6 L976.1 76.0 L976.5 72.0 M1172.5 72.0 L1172.0 73.3 L1171.0 76.0 L1169.7 80.0 L1168.5 84.0 L1168.0 86.0 L1167.3 88.0 L1165.8 92.0 M1137.9 92.0 L1136.0 89.7 L1134.9 88.0 L1132.7 84.0 L1132.0 82.4 L1131.2 80.0 L1130.0 76.0 L1129.2 72.0 M1332.0 72.0 L1328.7 76.0 L1328.0 76.7 L1324.2 80.0 L1324.0 80.2 L1320.0 83.1 L1318.7 84.0 L1316.0 86.1 L1313.4 88.0 L1312.0 89.3 L1309.3 92.0 M1270.5 164.0 L1268.0 166.9 L1267.0 168.0 L1264.0 172.0 L1264.0 172.0 M1240.0 174.6 L1237.5 172.0 L1236.0 170.8 L1233.1 168.0 L1232.0 167.1 L1228.3 164.0 L1228.0 163.8 M1263.4 92.0 L1264.0 91.7 L1268.0 89.5 L1270.3 88.0 L1272.0 86.4 L1274.2 84.0 L1276.0 80.0 L1276.0 79.7 L1276.6 76.0 L1276.5 72.0 M1356.0 237.5 L1355.1 240.0 M69.6 92.0 L70.0 88.0 L70.8 84.0 L72.0 80.5 L72.3 80.0 L75.9 76.0 L76.0 75.9 L80.0 74.5 L82.6 76.0 L84.0 76.9 L85.4 80.0 L87.3 84.0 L88.0 85.3 L88.9 88.0 L90.6 92.0 M162.9 92.0 L164.0 91.3 L168.0 88.9 L169.3 88.0 L172.0 86.3 L175.6 84.0 L176.0 83.7 L180.0 81.3 L182.1 80.0 L184.0 78.9 L188.0 76.7 L189.3 76.0 L192.0 74.6 L196.0 72.6 L197.3 72.0 M218.6 240.0 L220.0 236.0 L220.0 235.9 M381.8 172.0 L382.8 168.0 L383.6 164.0 M387.7 92.0 L388.0 90.7 L388.7 88.0 L390.1 84.0 L391.7 80.0 L392.0 79.4 L393.8 76.0 L396.0 72.1 L396.1 72.0 M513.2 172.0 L514.9 168.0 L516.0 166.2 L517.4 164.0 M538.8 92.0 L540.0 91.2 L544.0 88.0 L544.0 88.0 L548.0 85.1 L549.3 84.0 L552.0 82.1 L554.9 80.0 L556.0 79.2 L560.0 76.6 L561.0 76.0 L564.0 74.3 L568.0 72.3 L568.9 72.0 M1336.0 196.2 L1337.0 196.0 L1340.0 195.6 L1344.0 195.2 L1348.0 195.0 L1352.0 194.8 L1356.0 194.5 M37.8 72.0 L36.0 73.5 L32.8 76.0 L32.0 76.5 L28.0 78.5 L24.3 80.0 L24.0 80.1 L20.0 81.1 L16.0 81.6 L12.0 81.7 L8.0 81.2 L4.0 80.1 L3.7 80.0 L0.0 77.4 M268.1 72.0 L268.0 72.1 L264.0 75.3 L262.9 76.0 L260.0 77.2 L256.0 78.7 L252.4 80.0 L252.0 80.1 L248.0 81.3 L244.0 82.8 L241.4 84.0 L240.0 84.5 L236.0 86.5 L233.7 88.0 L232.0 89.0 L228.0 92.0 L227.9 92.0 M220.0 99.4 L219.5 100.0 L216.1 104.0 L216.0 104.1 L213.0 108.0 L212.0 109.4 M473.0 72.0 L472.9 76.0 L472.7 80.0 L472.4 84.0 L472.0 87.3 L471.9 88.0 L471.3 92.0 M444.2 164.0 L444.3 168.0 L444.6 172.0 M582.6 72.0 L584.0 72.2 L588.0 73.3 L592.0 75.1 L593.7 76.0 L596.0 77.5 L599.5 80.0 L600.0 80.4 L604.0 84.0 L604.0 84.0 L607.6 88.0 L608.0 88.5 L610.7 92.0 M641.6 164.0 L640.0 166.5 L636.6 168.0 L636.0 168.1 L634.0 168.0 L632.0 167.8 L628.0 166.5 L624.0 164.5 L623.2 164.0 M542.1 92.0 L544.0 90.6 L547.0 88.0 L548.0 87.3 L552.0 84.1 L552.1 84.0 L556.0 81.2 L557.7 80.0 L560.0 78.5 L564.0 76.0 L564.1 76.0 L568.0 74.1 L572.0 72.7 L575.4 72.0 M927.3 72.0 L928.0 72.7 L932.0 76.0 L932.0 76.0 L936.0 78.4 L938.8 80.0 L940.0 80.7 L944.0 83.0 L945.7 84.0 L948.0 85.7 L950.8 88.0 L952.0 89.4 L954.1 92.0 M940.4 164.0 L940.0 165.0 L938.8 168.0 L937.1 172.0 L936.0 174.2 M796.0 174.5 L795.8 172.0 L795.7 168.0 L795.5 164.0 M759.7 92.0 L760.0 88.3 L760.0 88.0 L760.5 84.0 L761.0 80.0 L761.8 76.0 L762.8 72.0 M1032.7 72.0 L1036.0 75.9 L1036.1 76.0 L1038.4 80.0 L1040.0 84.0 L1040.0 84.1 L1040.8 88.0 L1040.9 92.0 M1036.4 164.0 L1036.0 164.3 L1032.0 167.0 L1029.9 168.0 L1028.0 168.7 L1024.0 169.5 L1020.0 169.8 L1016.0 169.2 L1012.9 168.0 L1012.0 167.4 L1008.9 164.0 M985.3 92.0 L984.0 89.3 L983.3 88.0 L981.9 84.0 L981.2 80.0 L981.1 76.0 L981.3 72.0 M1169.0 72.0 L1168.0 74.7 L1167.4 76.0 L1165.8 80.0 L1164.2 84.0 L1164.0 84.6 L1162.0 88.0 L1160.0 90.8 L1158.4 92.0 M1145.1 92.0 L1144.0 91.5 L1140.0 88.2 L1139.8 88.0 L1136.9 84.0 L1136.0 82.6 L1134.8 80.0 L1133.4 76.0 L1132.3 72.0 M1327.1 72.0 L1324.0 75.1 L1322.9 76.0 L1320.0 78.2 L1317.1 80.0 L1316.0 80.8 L1312.0 83.2 L1310.6 84.0 L1308.0 85.8 L1304.8 88.0 L1304.0 88.9 L1301.2 92.0 M1266.1 164.0 L1264.0 166.3 L1262.1 168.0 L1260.0 170.3 L1257.6 172.0 L1256.0 173.3 L1252.0 174.7 L1248.0 174.2 L1244.0 172.3 L1243.6 172.0 L1240.0 169.7 L1238.0 168.0 L1236.0 166.7 L1232.5 164.0 L1232.0 163.7 M1271.6 92.0 L1272.0 91.8 L1276.0 89.4 L1278.0 88.0 L1280.0 85.3 L1280.9 84.0 L1281.8 80.0 L1281.6 76.0 L1280.9 72.0 M1356.0 225.8 L1354.3 228.0 L1352.0 232.0 L1352.0 232.0 L1350.5 236.0 L1349.7 240.0 M167.8 92.0 L168.0 91.9 L172.0 89.2 L173.8 88.0 L176.0 86.6 L179.9 84.0 L180.0 84.0 L184.0 81.5 L186.5 80.0 L188.0 79.2 L192.0 77.1 L194.1 76.0 L196.0 75.1 L200.0 73.2 L202.6 72.0 M387.3 172.0 L387.9 168.0 L388.0 166.8 L388.3 164.0 M389.5 92.0 L390.6 88.0 L392.0 84.0 L392.0 83.9 L393.8 80.0 L396.0 76.0 L396.0 75.9 L398.7 72.0 M522.4 172.0 L524.0 169.3 L524.8 168.0 L528.0 164.0 L528.0 164.0 M592.0 163.2 L593.1 164.0 L596.0 166.9 L597.0 168.0 L599.4 172.0 L600.0 173.4 M1336.0 203.3 L1340.0 202.3 L1344.0 201.6 L1348.0 201.1 L1352.0 200.7 L1356.0 200.3 M30.2 72.0 L28.0 73.5 L24.0 75.6 L22.7 76.0 L20.0 76.8 L16.0 77.3 L12.0 77.0 L8.1 76.0 L8.0 76.0 L4.0 72.6 L3.5 72.0 M256.9 72.0 L256.0 72.5 L252.0 74.6 L249.4 76.0 L248.0 76.5 L244.0 78.2 L240.5 80.0 L240.0 80.2 L236.0 82.2 L233.3 84.0 L232.0 84.8 L228.0 87.9 L227.9 88.0 L224.0 91.4 L223.4 92.0 L220.0 95.5 L219.6 96.0 L216.1 100.0 L216.0 100.2 L213.0 104.0 L212.0 105.3 M468.0 72.0 L468.0 72.3 L468.1 76.0 L468.2 80.0 L468.1 84.0 L468.0 85.8 L467.9 88.0 L467.5 92.0 M438.2 164.0 L438.6 168.0 L439.3 172.0 M392.4 172.0 L392.7 168.0 L393.0 164.0 M391.4 92.0 L392.0 89.7 L392.5 88.0 L394.1 84.0 L396.0 80.0 L396.0 80.0 L398.5 76.0 L400.0 73.8 L401.5 72.0 M567.9 76.0 L568.0 76.0 L572.0 74.6 L576.0 73.8 L580.0 73.6 L584.0 74.2 L588.0 75.4 L589.3 76.0 L592.0 77.3 L596.0 79.9 L596.2 80.0 L600.0 83.2 L600.9 84.0 L604.0 87.3 L604.7 88.0 L607.7 92.0 L608.0 92.5 M545.4 92.0 L548.0 89.8 L550.0 88.0 L552.0 86.4 L555.0 84.0 L556.0 83.2 L560.0 80.4 L560.6 80.0 L564.0 78.0 L567.9 76.0 M922.6 72.0 L924.0 73.6 L926.4 76.0 L928.0 77.3 L932.0 80.0 L932.0 80.0 L936.0 82.3 L939.0 84.0 L940.0 84.6 L944.0 87.3 L944.9 88.0 L948.0 90.9 L949.0 92.0 M937.6 164.0 L936.0 167.6 L935.8 168.0 L933.9 172.0 M800.7 172.0 L800.0 169.1 L799.8 168.0 L799.2 164.0 M761.6 92.0 L761.9 88.0 L762.3 84.0 L763.0 80.0 L763.8 76.0 L764.0 75.2 L764.9 72.0 M1028.3 72.0 L1032.0 75.9 L1032.1 76.0 L1034.8 80.0 L1036.0 82.6 L1036.6 84.0 L1037.4 88.0 L1037.6 92.0 M990.0 92.0 L988.0 88.0 L988.0 88.0 L986.6 84.0 L985.8 80.0 L985.6 76.0 L985.9 72.0 M1165.0 72.0 L1164.0 74.4 L1163.1 76.0 L1161.0 80.0 L1160.0 81.7 L1157.9 84.0 L1156.0 85.8 L1152.0 87.3 L1148.0 87.0 L1144.0 85.0 L1143.0 84.0 L1140.0 80.8 L1139.5 80.0 L1137.6 76.0 L1136.0 72.0 M1321.7 72.0 L1320.0 73.4 L1316.0 75.9 L1315.9 76.0 L1312.0 78.0 L1308.0 79.8 L1307.3 80.0 L1304.0 81.3 L1300.0 82.5 L1296.0 83.1 L1292.0 82.0 L1290.5 80.0 L1288.0 76.6 L1287.8 76.0 L1286.0 72.0 M1260.9 164.0 L1260.0 164.9 L1256.0 167.5 L1254.5 168.0 L1252.0 168.9 L1248.0 168.8 L1245.6 168.0 L1244.0 167.5 L1240.0 165.5 L1237.6 164.0 L1236.0 163.1 M1029.1 164.0 L1028.0 164.5 L1024.0 165.5 L1020.0 165.4 L1016.0 164.1 L1015.9 164.0 M582.3 164.0 L584.0 164.9 L588.0 167.8 L588.2 168.0 L591.9 172.0 L592.0 172.2 M530.8 172.0 L532.0 170.4 L534.2 168.0 L536.0 166.3 L539.1 164.0 L540.0 163.4 M172.0 92.3 L172.4 92.0 L176.0 89.5 L178.2 88.0 L180.0 86.8 L184.0 84.2 L184.4 84.0 L188.0 81.9 L191.3 80.0 L192.0 79.6 L196.0 77.7 L199.5 76.0 L200.0 75.8 L204.0 74.1 L208.0 72.4 L209.1 72.0 M1336.0 212.4 L1338.6 212.0 L1340.0 211.8 L1344.0 211.7 L1346.5 212.0 L1348.0 212.6 L1349.8 216.0 L1348.7 220.0 L1348.0 221.7 L1347.2 224.0 L1346.0 228.0 L1345.2 232.0 L1344.6 236.0 L1344.4 240.0 M240.3 72.0 L240.0 72.2 L236.0 74.7 L234.9 76.0 L232.0 77.9 L230.1 80.0 L228.0 81.7 L226.0 84.0 L224.0 85.9 L222.2 88.0 L220.0 90.5 L218.8 92.0 L216.0 95.5 L215.6 96.0 L212.6 100.0 L212.0 100.8 M458.7 72.0 L460.0 73.3 L461.3 76.0 L462.5 80.0 L463.1 84.0 L463.4 88.0 L463.5 92.0 M432.1 164.0 L432.8 168.0 L433.7 172.0 M397.5 172.0 L397.8 168.0 L398.1 164.0 M393.4 92.0 L394.6 88.0 L396.0 84.5 L396.2 84.0 L398.5 80.0 L400.0 77.6 L401.3 76.0 L404.0 72.8 L404.9 72.0 M574.2 76.0 L576.0 75.7 L580.0 75.6 L582.8 76.0 L584.0 76.2 L588.0 77.6 L592.0 79.6 L592.6 80.0 L596.0 82.5 L597.8 84.0 L600.0 86.2 L601.7 88.0 L604.0 91.0 L604.7 92.0 M548.0 92.7 L548.7 92.0 L552.0 89.0 L553.0 88.0 L556.0 85.6 L557.9 84.0 L560.0 82.5 L563.8 80.0 L564.0 79.9 L568.0 77.9 L572.0 76.5 L574.2 76.0 M918.5 72.0 L920.0 74.2 L921.5 76.0 L924.0 78.3 L926.2 80.0 L928.0 81.2 L932.0 83.6 L932.7 84.0 L936.0 85.9 L939.3 88.0 L940.0 88.5 L944.0 91.8 L944.2 92.0 M934.9 164.0 L933.0 168.0 L932.0 169.9 L930.8 172.0 M808.0 174.6 L806.1 172.0 L804.2 168.0 L804.0 167.6 L803.0 164.0 M763.5 92.0 L763.8 88.0 L764.0 85.7 L764.2 84.0 L764.9 80.0 L765.9 76.0 L767.1 72.0 M1023.4 72.0 L1024.0 72.5 L1027.8 76.0 L1028.0 76.3 L1030.8 80.0 L1032.0 82.2 L1032.8 84.0 L1033.8 88.0 L1034.0 92.0 M994.4 92.0 L992.3 88.0 L992.0 87.1 L990.9 84.0 L990.2 80.0 L990.1 76.0 L990.6 72.0 M1159.8 72.0 L1156.7 76.0 L1156.0 76.9 L1152.0 79.2 L1148.0 79.1 L1144.0 76.5 L1143.7 76.0 L1141.2 72.0 M1314.5 72.0 L1312.0 73.2 L1308.0 74.6 L1304.0 75.4 L1300.0 75.5 L1296.0 74.4 L1292.7 72.0 M1252.1 164.0 L1252.0 164.0 L1248.0 164.2 L1246.9 164.0 L1244.0 163.4 M555.2 164.0 L556.0 163.9 L560.0 163.5 L564.0 163.6 L568.0 164.0 L568.0 164.0 L572.0 164.8 L576.0 166.1 L580.0 168.0 L580.0 168.0 L584.0 170.9 L585.2 172.0 M538.9 172.0 L540.0 170.9 L543.9 168.0 L544.0 167.9 L548.0 165.9 L552.0 164.6 L555.2 164.0 M176.0 92.7 L177.0 92.0 L180.0 90.0 L182.8 88.0 L184.0 87.3 L188.0 84.8 L189.4 84.0 L192.0 82.6 L196.0 80.5 L197.1 80.0 L200.0 78.8 L204.0 77.2 L207.1 76.0 L208.0 75.7 L212.0 74.5 L216.0 73.3 L219.9 72.0 M1336.0 229.1 L1337.0 232.0 L1337.7 236.0 L1338.3 240.0 M409.2 76.0 L412.0 74.4 L416.0 73.2 L420.0 72.9 L424.0 73.3 L428.0 74.2 L432.0 75.4 L433.7 76.0 L436.0 76.8 L440.0 78.4 L443.7 80.0 L444.0 80.1 L448.0 82.6 L449.6 84.0 L452.0 86.9 L452.7 88.0 L454.2 92.0 M398.0 92.0 L399.4 88.0 L400.0 86.7 L401.5 84.0 L404.0 80.5 L404.5 80.0 L408.0 76.7 L409.2 76.0 M830.6 72.0 L832.0 76.0 L832.0 76.0 L833.8 80.0 L835.8 84.0 L836.0 84.4 L838.4 88.0 L840.0 90.3 L841.3 92.0 M832.6 164.0 L832.0 164.5 L828.0 167.1 L824.8 168.0 L824.0 168.2 L820.0 168.1 L819.7 168.0 L816.0 166.5 L813.1 164.0 M767.5 92.0 L767.7 88.0 L768.0 85.0 L768.1 84.0 L769.0 80.0 L770.2 76.0 L771.7 72.0 M910.9 72.0 L912.0 74.2 L913.0 76.0 L916.0 79.6 L916.4 80.0 L920.0 83.0 L921.3 84.0 L924.0 85.7 L927.8 88.0 L928.0 88.1 L932.0 90.5 L934.3 92.0 M929.6 164.0 L928.0 166.9 L927.3 168.0 L924.7 172.0 L924.0 173.0 M868.0 172.5 L867.8 172.0 L867.4 168.0 L868.0 164.7 L868.1 164.0 M868.2 92.0 L868.0 91.1 L867.4 88.0 L866.2 84.0 L864.5 80.0 L864.0 79.1 L862.0 76.0 L860.0 73.4 L858.8 72.0 M1002.0 76.0 L1004.0 74.1 L1008.0 73.3 L1012.0 74.2 L1015.8 76.0 L1016.0 76.1 L1020.0 79.3 L1020.7 80.0 L1023.5 84.0 L1024.0 85.6 L1024.7 88.0 L1024.4 92.0 L1024.0 92.9 M1004.8 92.0 L1004.0 90.9 L1002.2 88.0 L1000.7 84.0 L1000.5 80.0 L1002.0 76.0 M575.0 80.0 L576.0 79.8 L580.0 79.8 L581.0 80.0 L584.0 80.7 L588.0 82.4 L590.6 84.0 L592.0 85.0 L595.3 88.0 L596.0 88.9 L598.4 92.0 M555.4 92.0 L556.0 91.4 L559.4 88.0 L560.0 87.5 L564.0 84.5 L564.7 84.0 L568.0 82.2 L572.0 80.6 L575.0 80.0 M556.0 173.9 L560.0 172.9 L564.0 172.6 L568.0 173.1 L572.0 174.4 M188.0 92.2 L188.3 92.0 L192.0 90.1 L196.0 88.2 L196.7 88.0 L200.0 87.1 L204.0 86.8 L206.9 88.0 L207.5 92.0 M825.1 72.0 L827.0 76.0 L828.0 78.0 L829.0 80.0 L831.3 84.0 L832.0 85.2 L833.9 88.0 L836.0 91.0 L836.7 92.0 M769.6 92.0 L769.8 88.0 L770.3 84.0 L771.2 80.0 L772.0 77.3 L772.5 76.0 L774.4 72.0 M907.1 72.0 L908.0 73.9 L909.0 76.0 L911.9 80.0 L912.0 80.1 L916.0 83.8 L916.2 84.0 L920.0 86.6 L922.2 88.0 L924.0 89.1 L928.0 91.4 L929.0 92.0 M926.9 164.0 L924.4 168.0 L924.0 168.7 L921.5 172.0 L920.0 173.6 M876.0 173.5 L874.8 172.0 L873.5 168.0 L873.5 164.0 M872.6 92.0 L872.0 88.6 L871.9 88.0 L870.8 84.0 L869.3 80.0 L868.0 77.6 L867.1 76.0 L864.3 72.0 M409.1 80.0 L412.0 78.2 L416.0 77.0 L420.0 76.7 L424.0 77.2 L428.0 78.3 L432.0 79.7 L432.8 80.0 L436.0 81.4 L440.0 83.5 L440.9 84.0 L444.0 86.3 L445.9 88.0 L448.0 90.8 L448.8 92.0 M400.6 92.0 L402.4 88.0 L404.0 85.2 L404.9 84.0 L408.0 80.8 L409.1 80.0 M569.6 84.0 L572.0 83.1 L576.0 82.3 L580.0 82.3 L584.0 83.3 L585.7 84.0 L588.0 85.3 L591.6 88.0 L592.0 88.5 L594.9 92.0 M559.1 92.0 L560.0 91.1 L563.1 88.0 L564.0 87.3 L568.0 84.8 L569.6 84.0 M820.1 72.0 L822.4 76.0 L824.0 78.7 L824.7 80.0 L827.1 84.0 L828.0 85.3 L829.8 88.0 L832.0 91.1 L832.7 92.0 M771.8 92.0 L771.9 88.0 L772.0 87.5 L772.5 84.0 L773.6 80.0 L775.1 76.0 L776.0 74.1 L777.3 72.0 M903.1 72.0 L904.0 74.3 L904.7 76.0 L907.3 80.0 L908.0 80.7 L911.2 84.0 L912.0 84.6 L916.0 87.6 L916.6 88.0 L920.0 90.0 L923.4 92.0 L924.0 92.3 M924.1 164.0 L924.0 164.1 L921.3 168.0 L920.0 169.7 L917.8 172.0 L916.0 173.6 M884.0 174.3 L881.3 172.0 L880.0 170.0 L879.0 168.0 L878.3 164.0 M876.7 92.0 L876.1 88.0 L876.0 87.5 L875.2 84.0 L873.9 80.0 L872.0 76.2 L871.9 76.0 L869.3 72.0 M409.8 84.0 L412.0 82.5 L416.0 81.1 L420.0 80.8 L424.0 81.4 L428.0 82.6 L431.4 84.0 L432.0 84.3 L436.0 86.6 L438.2 88.0 L440.0 89.6 L442.4 92.0 M403.8 92.0 L404.0 91.5 L406.0 88.0 L408.0 85.5 L409.8 84.0 M567.7 88.0 L568.0 87.8 L572.0 86.0 L576.0 85.0 L580.0 85.2 L584.0 86.4 L586.8 88.0 L588.0 89.0 L590.8 92.0 M563.3 92.0 L564.0 91.3 L567.7 88.0 M815.0 72.0 L816.0 73.2 L817.9 76.0 L820.0 79.2 L820.5 80.0 L823.1 84.0 L824.0 85.3 L825.8 88.0 L828.0 91.0 L828.8 92.0 M774.3 92.0 L774.4 88.0 L775.0 84.0 L776.0 80.3 L776.1 80.0 L778.0 76.0 L780.0 72.8 L780.6 72.0 M898.3 72.0 L899.7 76.0 L900.0 76.5 L902.0 80.0 L904.0 82.1 L905.8 84.0 L908.0 85.8 L910.9 88.0 L912.0 88.7 L916.0 91.1 L917.5 92.0 M921.0 164.0 L920.0 165.4 L917.8 168.0 L916.0 169.9 L913.3 172.0 L912.0 172.9 L908.0 174.7 M892.0 174.2 L888.0 172.1 L887.9 172.0 L884.3 168.0 L884.0 167.1 L883.0 164.0 M881.0 92.0 L880.7 88.0 L880.0 84.0 L880.0 83.8 L879.0 80.0 L877.3 76.0 L876.0 74.1 L874.7 72.0 M411.5 88.0 L412.0 87.6 L416.0 85.8 L420.0 85.5 L424.0 86.1 L428.0 87.6 L428.9 88.0 L432.0 89.9 L434.8 92.0 M408.0 92.0 L408.0 91.9 L411.5 88.0 M568.9 92.0 L572.0 90.0 L576.0 88.6 L580.0 88.9 L584.0 90.9 L585.4 92.0 M809.3 72.0 L812.0 74.7 L813.1 76.0 L816.0 79.8 L816.2 80.0 L818.9 84.0 L820.0 85.4 L821.8 88.0 L824.0 90.9 L824.8 92.0 M777.0 92.0 L777.1 88.0 L777.8 84.0 L779.2 80.0 L780.0 78.3 L781.5 76.0 L784.0 72.9 L785.0 72.0 M890.1 72.0 L889.1 76.0 L892.0 78.2 L893.0 80.0 L896.0 82.0 L898.1 84.0 L900.0 85.1 L904.0 87.9 L904.2 88.0 L908.0 90.3 L910.9 92.0 L912.0 92.6 M917.4 164.0 L916.0 165.7 L913.4 168.0 L912.0 169.1 L908.0 171.3 L905.3 172.0 L904.0 172.3 L900.0 172.4 L897.8 172.0 L896.0 171.6 L892.0 169.4 L890.3 168.0 L888.0 164.5 L887.8 164.0 M886.1 92.0 L886.6 88.0 L887.2 84.0 L887.7 80.0 L887.4 76.0 L884.0 73.2 L883.2 72.0 M417.4 92.0 L420.0 91.6 L422.2 92.0 L424.0 92.5 M416.0 92.4 L417.4 92.0 M788.0 80.0 L792.0 77.5 L796.0 76.7 L800.0 77.3 L804.0 79.3 L804.8 80.0 L808.0 82.8 L809.1 84.0 L812.0 87.3 L812.6 88.0 L815.8 92.0 L816.0 92.2 M783.7 92.0 L783.9 88.0 L784.0 87.5 L785.3 84.0 L788.0 80.0 L788.0 80.0 M793.6 84.0 L796.0 83.3 L800.0 83.9 L800.2 84.0 L804.0 86.4 L805.7 88.0 L808.0 90.2 L809.5 92.0 M789.0 92.0 L789.8 88.0 L792.0 84.8 L793.6 84.0"/><path stroke-dasharray="4 3" d="M331.6 72.0 L330.9 76.0 L330.6 80.0 L330.5 84.0 L330.6 88.0 L330.9 92.0 M362.3 92.0 L363.1 88.0 L364.0 84.5 L364.1 84.0 L365.0 80.0 L365.9 76.0 L366.9 72.0 M313.4 72.0 L313.4 76.0 L313.5 80.0 L313.7 84.0 L313.9 88.0 L314.0 92.0 M220.7 132.0 L220.0 133.6 L219.0 136.0 L217.5 140.0 L216.2 144.0 L216.0 144.9 L215.1 148.0 L214.0 152.0 L212.9 156.0 L212.0 158.8 L211.5 160.0 M500.9 72.0 L503.1 76.0 L504.0 77.2 L507.2 80.0 L508.0 80.5 L512.0 82.0 L516.0 82.4 L520.0 82.1 L524.0 81.4 L528.0 80.3 L528.8 80.0 L532.0 78.9 L536.0 77.2 L538.3 76.0 L540.0 75.1 L544.0 72.9 L545.4 72.0 M627.8 72.0 L628.0 72.4 L629.5 76.0 L631.3 80.0 L632.0 81.3 L633.3 84.0 L635.3 88.0 L636.0 89.2 L637.6 92.0 M696.0 92.8 L695.8 92.0 L693.6 88.0 L692.0 85.8 L691.0 84.0 L688.4 80.0 L688.0 79.5 L685.9 76.0 L684.0 72.7 L683.6 72.0 M1066.8 72.0 L1066.4 76.0 L1066.4 80.0 L1066.5 84.0 L1066.7 88.0 L1067.1 92.0 M1111.1 92.0 L1110.6 88.0 L1110.1 84.0 L1109.5 80.0 L1109.0 76.0 L1108.3 72.0 M1196.8 72.0 L1196.0 73.6 L1194.9 76.0 L1194.2 80.0 L1194.8 84.0 L1196.0 86.2 L1197.5 88.0 L1200.0 89.5 L1204.0 90.7 L1208.0 91.0 L1212.0 90.7 L1216.0 90.0 L1220.0 89.0 L1223.5 88.0 L1224.0 87.8 L1228.0 86.2 L1232.0 84.4 L1232.9 84.0 L1236.0 81.9 L1238.7 80.0 L1240.0 78.3 L1241.7 76.0 L1242.5 72.0 M728.0 79.7 L727.7 80.0 L724.0 83.7 L723.8 84.0 L721.2 88.0 L720.0 91.5 L719.8 92.0 L720.0 92.7 M737.3 92.0 L738.2 88.0 L738.3 84.0 L737.3 80.0 L736.0 77.9 L732.0 77.4 L728.0 79.7 M1356.0 106.4 L1352.0 106.5 L1348.0 107.6 L1347.2 108.0 L1344.0 110.1 L1342.2 112.0 L1340.0 115.6 L1339.8 116.0 L1338.8 120.0 L1338.6 124.0 L1338.8 128.0 L1339.3 132.0 L1340.0 135.9 L1340.0 136.0 L1341.0 140.0 L1342.2 144.0 L1343.6 148.0 L1344.0 148.9 L1345.6 152.0 L1348.0 155.7 L1348.3 156.0 L1352.0 159.1 L1354.5 160.0 L1356.0 160.4 M0.0 184.7 L0.9 188.0 L2.7 192.0 L4.0 194.2 L5.6 196.0 L8.0 198.0 M8.0 158.2 L6.5 160.0 L4.0 163.2 L3.5 164.0 L1.6 168.0 L0.3 172.0 L0.0 173.4 M1.2 240.0 L0.0 238.1 M211.8 216.0 L212.0 215.6 L214.1 212.0 L216.0 208.8 L216.6 208.0 L219.3 204.0 L220.0 202.7 M296.0 174.9 L300.0 174.2 L304.0 173.5 L308.0 172.7 L310.8 172.0 L312.0 171.7 L316.0 170.4 L320.0 168.9 L321.9 168.0 L324.0 166.9 L328.0 164.7 L329.3 164.0 M374.3 92.0 L375.1 88.0 L376.0 84.5 L376.1 84.0 L377.3 80.0 L378.6 76.0 L380.0 72.2 L380.1 72.0 M1208.0 173.0 L1207.5 172.0 L1204.4 168.0 L1204.0 167.6 L1200.1 164.0 L1200.0 163.9 M1148.8 164.0 L1148.0 164.6 L1144.0 167.4 L1143.0 168.0 L1140.0 169.7 L1136.0 171.5 L1134.5 172.0 L1132.0 172.8 L1128.0 173.7 L1124.0 174.4 L1120.0 175.0 M112.4 72.0 L112.0 72.4 L108.4 76.0 L108.0 76.7 L106.2 80.0 L105.4 84.0 L105.6 88.0 L106.9 92.0 M150.8 92.0 L152.0 91.4 L156.0 89.5 L158.8 88.0 L160.0 87.4 L164.0 85.2 L166.1 84.0 L168.0 82.9 L172.0 80.7 L173.1 80.0 L176.0 78.4 L180.0 76.2 L180.4 76.0 L184.0 74.1 L188.0 72.1 L188.1 72.0 M290.2 72.0 L290.3 76.0 L290.0 80.0 L288.9 84.0 L288.0 85.5 L284.9 88.0 L284.0 88.4 L280.0 89.1 L276.0 89.3 L272.0 89.2 L268.0 89.1 L264.0 89.2 L260.0 89.3 L256.0 89.7 L252.0 90.3 L248.0 91.2 L245.5 92.0 L244.0 92.4 M221.4 108.0 L220.0 109.6 L218.1 112.0 L216.0 114.9 L215.2 116.0 L212.6 120.0 L212.0 121.1 M483.6 72.0 L483.6 76.0 L483.6 80.0 L483.5 84.0 L483.3 88.0 L482.8 92.0 M469.3 164.0 L468.0 167.1 L467.7 168.0 L466.1 172.0 M598.6 72.0 L600.0 72.9 L604.0 75.7 L604.4 76.0 L608.0 79.0 L609.2 80.0 L612.0 82.8 L613.1 84.0 L616.0 87.4 L616.5 88.0 L619.5 92.0 L620.0 92.7 M664.0 164.0 L664.0 164.1 L666.2 168.0 L667.6 172.0 L668.0 174.7 M716.0 172.3 L715.8 172.0 L712.0 169.0 L710.4 168.0 L708.0 166.8 L704.0 164.7 L702.8 164.0 M750.6 164.0 L752.0 164.8 L756.0 167.0 L758.1 168.0 L760.0 168.7 L764.0 170.0 L768.0 170.9 L772.0 171.3 L776.0 170.8 L780.0 168.7 L780.7 168.0 L783.3 164.0 M754.0 92.0 L754.4 88.0 L754.8 84.0 L755.2 80.0 L755.8 76.0 L756.0 74.5 L756.4 72.0 M955.6 72.0 L956.0 72.1 L956.7 72.0 M1044.9 72.0 L1046.9 76.0 L1048.0 79.0 L1048.3 80.0 L1049.2 84.0 L1049.7 88.0 L1049.9 92.0 M1052.9 164.0 L1052.0 164.8 L1048.8 168.0 L1048.0 168.6 L1044.0 171.4 L1043.1 172.0 L1040.0 173.6 M994.1 172.0 L993.7 168.0 L994.0 164.0 M950.7 164.0 L949.9 168.0 L949.2 172.0 M1178.5 72.0 L1177.1 76.0 L1176.1 80.0 L1176.0 80.8 L1175.4 84.0 L1175.0 88.0 L1175.0 92.0 M1248.0 92.6 L1249.8 92.0 L1252.0 91.1 L1256.0 89.3 L1258.5 88.0 L1260.0 86.9 L1263.7 84.0 L1264.0 83.6 L1266.6 80.0 L1268.0 76.1 L1268.0 76.0 L1268.5 72.0 M1341.2 72.0 L1340.0 74.9 L1339.5 76.0 L1336.6 80.0 L1336.0 80.6 L1332.4 84.0 L1332.0 84.3 L1328.0 87.6 L1327.4 88.0 L1324.0 90.9 L1322.8 92.0 M1280.0 163.9 L1279.9 164.0 L1276.0 167.7 L1275.8 168.0 L1272.8 172.0 L1272.0 173.5 M1336.0 183.4 L1338.4 184.0 L1340.0 184.3 L1344.0 185.1 L1348.0 185.6 L1352.0 185.8 L1356.0 185.7 M50.4 92.0 L48.0 90.3 L44.0 89.2 L40.0 89.2 L36.0 89.8 L32.0 90.5 L28.0 91.2 L24.0 91.9 L23.6 92.0 L20.0 92.6 M8.0 93.8 L4.0 94.0 L0.0 94.3 M215.1 240.0 L216.0 236.9 L216.2 236.0 L217.8 232.0 L219.8 228.0 L220.0 227.6 M360.0 174.0 L364.0 172.3 L364.5 172.0 L368.0 169.7 L369.8 168.0 L372.0 165.3 L372.8 164.0 M384.2 92.0 L385.2 88.0 L386.4 84.0 L387.9 80.0 L388.0 79.8 L389.7 76.0 L391.7 72.0 M489.5 172.0 L489.0 168.0 L490.7 164.0 M531.6 92.0 L532.0 91.7 L536.0 89.2 L537.6 88.0 L540.0 86.5 L543.7 84.0 L544.0 83.8 L548.0 81.1 L549.5 80.0 L552.0 78.3 L555.4 76.0 L556.0 75.6 L560.0 73.0 L561.8 72.0 M1229.0 172.0 L1228.0 171.0 L1225.4 168.0 L1224.0 166.8 L1221.0 164.0 L1220.0 163.2 M1129.5 92.0 L1128.0 89.0 L1127.6 88.0 L1126.2 84.0 L1125.1 80.0 L1124.3 76.0 L1124.0 74.3 L1123.7 72.0 M434.5 72.0 L436.0 72.4 L440.0 73.5 L444.0 74.6 L448.0 75.9 L448.4 76.0 L452.0 77.8 L454.6 80.0 L456.0 81.8 L457.1 84.0 L458.4 88.0 L459.1 92.0 M424.6 164.0 L425.8 168.0 L427.2 172.0 L428.0 173.9 M403.6 172.0 L404.0 168.2 L404.0 168.0 L404.7 164.0 M395.5 92.0 L396.0 90.5 L396.9 88.0 L398.7 84.0 L400.0 81.8 L401.2 80.0 L404.0 76.5 L404.6 76.0 L408.0 73.0 L409.7 72.0 M838.8 72.0 L838.8 76.0 L839.7 80.0 L840.0 80.7 L841.6 84.0 L844.0 88.0 L844.0 88.0 L847.3 92.0 L848.0 92.8 M862.1 92.0 L861.7 88.0 L860.6 84.0 L860.0 82.6 L858.5 80.0 L856.0 76.6 L855.5 76.0 L852.0 72.8 L850.7 72.0 M914.6 72.0 L916.0 74.3 L917.1 76.0 L920.0 79.0 L921.1 80.0 L924.0 82.2 L926.8 84.0 L928.0 84.7 L932.0 87.1 L933.6 88.0 L936.0 89.5 L939.4 92.0 L940.0 92.5 M932.2 164.0 L932.0 164.4 L930.2 168.0 L928.0 171.7 L927.8 172.0 M858.0 172.0 L858.8 168.0 L860.0 165.4 L860.5 164.0 M842.8 164.0 L840.2 168.0 L840.0 168.2 L836.0 171.8 L835.7 172.0 L832.0 173.8 L828.0 174.8 M820.0 174.7 L816.0 173.5 L813.5 172.0 L812.0 170.9 L809.6 168.0 L808.0 165.6 L807.3 164.0 M765.5 92.0 L765.7 88.0 L766.2 84.0 L766.9 80.0 L767.9 76.0 L768.0 75.8 L769.4 72.0 M1017.5 72.0 L1020.0 73.8 L1022.7 76.0 L1024.0 77.3 L1026.3 80.0 L1028.0 82.8 L1028.7 84.0 L1029.7 88.0 L1029.8 92.0 M999.1 92.0 L996.8 88.0 L996.0 85.7 L995.4 84.0 L994.8 80.0 L995.0 76.0 L996.0 72.5 L996.2 72.0 M567.8 80.0 L568.0 79.9 L572.0 78.5 L576.0 77.7 L580.0 77.7 L584.0 78.4 L588.0 79.8 L588.3 80.0 L592.0 82.2 L594.4 84.0 L596.0 85.4 L598.6 88.0 L600.0 89.8 L601.6 92.0 M551.9 92.0 L552.0 91.9 L556.0 88.0 L556.0 88.0 L560.0 84.8 L561.1 84.0 L564.0 82.1 L567.8 80.0 M559.7 168.0 L560.0 168.0 L564.0 167.9 L565.2 168.0 L568.0 168.3 L572.0 169.3 L576.0 171.0 L577.7 172.0 L580.0 173.6 M547.7 172.0 L548.0 171.8 L552.0 169.8 L556.0 168.6 L559.7 168.0 M182.0 92.0 L184.0 90.7 L188.0 88.1 L188.2 88.0 L192.0 85.9 L195.7 84.0 L196.0 83.9 L200.0 82.3 L204.0 81.0 L207.6 80.0 L208.0 79.9 L212.0 79.5 L216.0 79.8 L216.4 80.0 L217.7 84.0 L216.2 88.0 L216.0 88.2 L213.8 92.0 L212.0 94.8 L211.3 96.0 M799.9 72.0 L800.0 72.0 L804.0 73.7 L807.3 76.0 L808.0 76.5 L811.3 80.0 L812.0 80.8 L814.4 84.0 L816.0 86.0 L817.5 88.0 L820.0 91.2 L820.6 92.0 M780.0 92.3 L779.9 92.0 L780.0 89.7 L780.1 88.0 L781.0 84.0 L782.9 80.0 L784.0 78.3 L786.1 76.0 L788.0 74.4 L792.0 72.4 L793.8 72.0 M895.5 92.0 L896.0 91.7 L900.0 91.9 L900.2 92.0 M912.8 164.0 L912.0 164.8 L908.0 167.1 L905.0 168.0 L904.0 168.3 L900.0 168.1 L899.6 168.0 L896.0 166.3 L893.5 164.0"/></g>
<rect x="0" y="70.5" width="1356" height="2.15" fill="#000"/>
<!-- search -->
<rect x="488.8" y="8" width="321.7" height="24.2" rx="3" fill="#fff" stroke="#c9c9c9" stroke-width="1"/>
<!-- sidebar -->
<rect x="9.8" y="92" width="201.6" height="544.3" rx="2.6" fill="#fff"/>
<rect x="22.8" y="103.8" width="172.3" height="31.2" rx="3" fill="#fff" stroke="#e4e4e4" stroke-width="1"/>
<rect x="9.8" y="339.5" width="201.6" height="25.5" fill="#ecf3fe"/>
<rect x="9.8" y="339.5" width="3.6" height="25.5" fill="#4f8af5"/>
<!-- header card -->
<rect x="221.2" y="93.4" width="1115.1" height="71.4" rx="2.6" fill="#1b3f70" opacity="0.16"/>
<rect x="221.2" y="92.2" width="1115.1" height="71.4" rx="2.6" fill="#fafaf9"/>
<rect x="222" y="93" width="1113.5" height="69.8" rx="2" fill="#f3f3f3"/>
<rect x="235.05" y="106.05" width="40" height="40" rx="2.8" fill="#000"/>
<!-- content card -->
<rect x="221.2" y="174.2" width="1115.2" height="487.7" rx="2.6" fill="#fff"/>
<!-- pbBlock -->
<rect x="232.1" y="245.5" width="1093" height="160.1" rx="3" fill="#6d7692"/>
<path d="M232.1 248 H1325.1 V402.6 a3 3 0 0 1 -3 3 H235.1 a3 3 0 0 1 -3 -3 Z" fill="#f8f8f8"/>
<path d="M232.6 248 V402.6 a2.5 2.5 0 0 0 2.5 2.5 H1322.1 a2.5 2.5 0 0 0 2.5 -2.5 V248" fill="none" stroke="#eaeaea" stroke-width="1"/>
<rect x="233.1" y="376.1" width="1091" height="1" fill="#dbdbdb"/>
<!-- table -->
<rect x="242.75" y="274.4" width="1072.7" height="84.9" fill="#fff" stroke="#e0e3e5" stroke-width="1"/>
<rect x="243.25" y="274.9" width="1071.7" height="16.5" fill="#f2f3f3"/>
<rect x="243.25" y="291.4" width="1071.7" height="23" fill="#e3f3ff"/>
<rect x="243.25" y="291" width="1071.7" height="0.8" fill="#e0e3e5"/>
<rect x="243.25" y="314.2" width="1071.7" height="0.8" fill="#ececec"/>
<rect x="243.25" y="336.9" width="1071.7" height="0.8" fill="#ececec"/>
<!-- info icon -->
<rect x="309.9" y="341.9" width="10.6" height="10.7" rx="1.7" fill="#f5f7fc" stroke="#d2d5d9" stroke-width="1"/>
<!-- select -->
<rect x="740.4" y="341.6" width="143" height="13.8" rx="1.8" fill="#fff" stroke="#767676" stroke-width="1"/>
<path d="M873.6 347.2 L876.9 350.4 L880.2 347.2" fill="none" stroke="#333" stroke-width="0.9"/>
<!-- save -->
<rect x="572.9" y="383.6" width="24.6" height="16.3" rx="2.6" fill="url(#savg)" stroke="#b5b5b5" stroke-width="1"/>
<path d="M575 400 H595.5" stroke="#7f7f7f" stroke-width="0.9"/>
<!-- help icon -->
<circle cx="1315.2" cy="192.8" r="6.1" fill="url(#hg)"/><circle cx="1315.2" cy="192.8" r="5.8" fill="none" stroke="#c07c1c" stroke-opacity="0.55" stroke-width="0.6"/>
</svg>

<!-- logo -->
<svg class="abs" style="left:18px;top:9px" width="36" height="22" viewBox="18 9 36 22">
<polygon fill="#f09c40" points="29.5,13.4 32.1,10.5 51.1,10.5 51.1,17.2 47.8,20.3 41.7,20.3 41.7,13.4"/>
<polygon fill="#336778" points="24.5,18.3 27.2,15.4 39.7,15.4 39.7,21.9 36.6,25 30.6,25 30.6,18.3"/>
<polygon fill="#ea6249" points="19.2,23.4 22.3,20.3 28.8,20.3 28.8,26.7 25.7,29.8 19.2,29.8"/>
</svg>
<svg class="abs" style="left:502px;top:16.3px" width="11" height="11" viewBox="0 0 11 11"><circle cx="4.3" cy="4.3" r="3.3" fill="none" stroke="#747474" stroke-width="1.15"/><path d="M6.8 6.8 L10 10" stroke="#747474" stroke-width="1.35" stroke-linecap="round"/></svg>
<div class="abs" style="left:1128.3px;top:10.4px;width:20.4px;height:19.3px;border:1px solid #e4e4e4;border-right:none;border-radius:3px 0 0 3px;background:#fff"></div>
<div class="abs" style="left:1148px;top:10.4px;width:14px;height:19.3px;border:1px solid #a6a6a6;border-radius:0 3px 3px 0;background:#fff"></div>
<svg class="abs" style="left:0;top:0" width="1356" height="40" viewBox="0 0 1356 40">
<polygon points="1138.20,14.60 1139.73,18.80 1144.19,18.95 1140.67,21.70 1141.90,26.00 1138.20,23.50 1134.50,26.00 1135.73,21.70 1132.21,18.95 1136.67,18.80" fill="#e3e3e3" stroke="#e3e3e3" stroke-width="0.8" stroke-linejoin="round"/>
<polygon points="1151.4,19.4 1158.8,19.4 1155.1,23.7" fill="#929292"/>
<rect x="1175" y="12.2" width="16.1" height="16.1" rx="3" fill="#929292"/>
<path d="M1177.7 20.25 H1188.5 M1183.1 14.8 V25.7" stroke="#fff" stroke-width="1.6"/>
<path d="M1213.9 12.7 C1216 12.7 1221.6 20 1221.6 24.3 C1221.6 26.8 1217.5 28 1213.9 28 C1210.3 28 1206.1 26.8 1206.1 24.3 C1206.1 20 1211.8 12.7 1213.9 12.7 Z" fill="#929292"/>
<path d="M1208.4 22.6 L1212.7 16.6 L1214.6 19.5 L1216.3 18.4 L1219.3 22.6 Z" fill="#fff"/>
<path d="M1210.6 21.8 L1212.4 18.9 L1213.6 21.8 Z M1215.0 21.9 L1216.3 20.0 L1217.6 21.9 Z" fill="#929292"/>
<path d="M1206 23.0 H1222" stroke="#fff" stroke-width="1.4"/>
<path d="M1213.4 22.6 C1212.9 24.6 1213.6 26.4 1214.4 28.2" stroke="#fff" stroke-width="1.2" fill="none"/>
<path d="M1236.15 17.7 A3.8 3.65 0 1 1 1242.4 20.3 C1240.7 21.5 1239.85 22.2 1239.85 23.8" fill="none" stroke="#929292" stroke-width="2.45"/>
<rect x="1238.45" y="25.15" width="2.8" height="2.7" rx="0.7" fill="#929292"/>
<g fill="#929292"><circle cx="1265.55" cy="20.5" r="5.35"/><rect x="1263.90" y="13.10" width="3.3" height="4.19" rx="1.4" transform="rotate(0.0 1265.55 20.5)"/><rect x="1263.90" y="13.10" width="3.3" height="4.19" rx="1.4" transform="rotate(60.0 1265.55 20.5)"/><rect x="1263.90" y="13.10" width="3.3" height="4.19" rx="1.4" transform="rotate(120.0 1265.55 20.5)"/><rect x="1263.90" y="13.10" width="3.3" height="4.19" rx="1.4" transform="rotate(180.0 1265.55 20.5)"/><rect x="1263.90" y="13.10" width="3.3" height="4.19" rx="1.4" transform="rotate(240.0 1265.55 20.5)"/><rect x="1263.90" y="13.10" width="3.3" height="4.19" rx="1.4" transform="rotate(300.0 1265.55 20.5)"/></g>
<circle cx="1265.55" cy="20.5" r="3.35" fill="#fff"/>
<path d="M1266.25 17.6 L1263.55 21.0 L1265.35 21.0 L1264.75 23.4 L1267.55 19.9 L1265.75 19.9 Z" fill="#929292"/>
<path d="M1291.4 12.7 C1294.6 12.7 1296.1 15 1296.1 17.6 C1296.1 21.4 1297.2 22.8 1298.6 23.8 C1299.3 24.3 1299.1 25.3 1298.2 25.3 H1284.6 C1283.7 25.3 1283.5 24.3 1284.2 23.8 C1285.6 22.8 1286.7 21.4 1286.7 17.6 C1286.7 15 1288.2 12.7 1291.4 12.7 Z" fill="#929292"/>
<path d="M1289.5 26.4 H1293.3 C1293.3 27.3 1292.5 27.9 1291.4 27.9 C1290.3 27.9 1289.5 27.3 1289.5 26.4 Z" fill="#929292"/>
</svg>
<svg class="abs" style="left:1313px;top:4px" width="29" height="29" viewBox="0 0 29 29">
<defs><clipPath id="avc"><circle cx="14.2" cy="13.8" r="13.3"/></clipPath><filter id="avb" x="-20%" y="-20%" width="140%" height="140%"><feGaussianBlur stdDeviation="0.75"/></filter></defs>
<circle cx="14.2" cy="13.8" r="13.3" fill="#c6c3c0"/>
<g clip-path="url(#avc)"><g filter="url(#avb)">
<rect x="-3" y="-3" width="35" height="35" fill="#c6c3c0"/>
<path d="M-3 -3 H16 C18.5 0 20 4 20 8 C21 13 21.4 20 20.6 24 C19.6 27 18 29 16.5 32 H-3 Z" fill="#3f2d26"/>
<ellipse cx="12.3" cy="15.8" rx="8.2" ry="10.4" fill="#ddb5a0"/>
<path d="M6 22 C9 27 15 27 18.5 23 L18 32 H4 Z" fill="#d2a690"/>
<path d="M2.5 17 C2.5 9 6 3.5 12 3 C17 2.8 20.3 5.5 20.8 10 C17.5 8.6 14.5 7 12.4 5.4 C8.6 7 5.4 10.5 4.3 17.5 Z" fill="#3f2d26"/>
<path d="M20 10 C21.6 13 21.6 18 20.6 22 C20 24.5 19 26.5 17.6 28 L17.2 25.5 C19 22.5 20.2 17 19.8 12 Z" fill="#4a352c"/>
<path d="M10.6 19.9 C12.5 21.6 15.5 21.5 17.3 19.6 C15.5 20.3 12.5 20.5 10.6 19.9 Z" fill="#f2e4df" stroke="#b9776f" stroke-width="0.7"/>
<ellipse cx="9.9" cy="13.2" rx="1.5" ry="0.7" fill="#4a342c"/><ellipse cx="17.2" cy="13.1" rx="1.3" ry="0.7" fill="#4a342c"/>
<path d="M7.9 11.6 C9 10.9 10.8 10.9 11.9 11.5 M15.6 11.4 C16.6 10.8 18 10.9 18.8 11.5" stroke="#5a4036" stroke-width="0.6" fill="none"/>
<path d="M13.6 14.5 C13.8 16 13.9 17 13.2 17.6" stroke="#c39782" stroke-width="0.7" fill="none"/>
</g></g>
<circle cx="14.2" cy="13.8" r="13.15" fill="none" stroke="rgba(90,85,85,.45)" stroke-width="0.5"/>
</svg>
<!-- waffle -->
<svg class="abs" style="left:19.6px;top:46.2px" width="18" height="18" viewBox="0 0 18 18" fill="#747474">
<circle cx="2.4" cy="2.4" r="2"/><circle cx="8.9" cy="2.4" r="2"/><circle cx="15.4" cy="2.4" r="2"/>
<circle cx="2.4" cy="8.9" r="2"/><circle cx="8.9" cy="8.9" r="2"/><circle cx="15.4" cy="8.9" r="2"/>
<circle cx="2.4" cy="15.4" r="2"/><circle cx="8.9" cy="15.4" r="2"/><circle cx="15.4" cy="15.4" r="2"/>
</svg>
<svg class="abs" style="left:0;top:40px" width="1356" height="30" viewBox="0 40 1356 30" fill="none" stroke="#505050" stroke-width="1.25" stroke-linecap="round" stroke-linejoin="round"><path d="M265.0 54.6 L268.8 58.3 L272.5 54.6"/><path d="M328.6 54.6 L332.4 58.3 L336.3 54.6"/><path d="M511.9 54.6 L515.9 58.3 L519.8 54.6"/><path d="M615.2 54.6 L619.2 58.3 L623.2 54.6"/><path d="M738.8 54.6 L742.8 58.3 L746.8 54.6"/><path d="M824.4 54.6 L828.4 58.3 L832.4 54.6"/><path d="M899.1 54.6 L903.1 58.3 L907.1 54.6"/></svg><svg class="abs" style="left:1330.6px;top:51.2px" width="12" height="12" viewBox="0 0 12.4 12.4"><path d="M0.6 11.2 L1.3 8.2 L7.6 1.9 L9.9 4.2 L3.6 10.5 Z" fill="#6b6b6b"/><path d="M8.3 1.2 L9.0 0.5 C9.3 0.2 9.8 0.2 10.1 0.5 L11.3 1.7 C11.6 2.0 11.6 2.5 11.3 2.8 L10.6 3.5 Z" fill="#6b6b6b"/><path d="M1.6 7.6 L4.2 10.2" stroke="#fff" stroke-width="0.7"/></svg>
<svg class="abs" style="left:30.3px;top:115.3px" width="11" height="11" viewBox="0 0 11 11"><circle cx="4.3" cy="4.3" r="3.3" fill="none" stroke="#747474" stroke-width="1.15"/><path d="M6.8 6.8 L10 10" stroke="#747474" stroke-width="1.35" stroke-linecap="round"/></svg>
<svg class="abs" style="left:10px;top:140px" width="30" height="490" viewBox="10 140 30 490" fill="none" stroke="#6a6a6a" stroke-width="1.35" stroke-linecap="round" stroke-linejoin="round"><path d="M19.1 157.5 L22.85 161.3 L26.6 157.5"/><path d="M20.4 477.0 L24.4 480.7 L20.4 484.4"/><path d="M20.4 502.5 L24.4 506.2 L20.4 509.9"/><path d="M20.4 528.0 L24.4 531.7 L20.4 535.4"/><path d="M20.4 553.5 L24.4 557.2 L20.4 560.9"/><path d="M20.4 579.0 L24.4 582.7 L20.4 586.4"/><path d="M20.4 604.5 L24.4 608.2 L20.4 611.9"/></svg>
<svg class="abs" style="left:235px;top:106px" width="40" height="40" viewBox="235 106 40 40"><g fill="#fff"><circle cx="254.95" cy="126.1" r="7.9"/><rect x="252.15" y="114.80" width="5.6" height="6.56" rx="2.0" transform="rotate(0.0 254.95 126.1)"/><rect x="252.15" y="114.80" width="5.6" height="6.56" rx="2.0" transform="rotate(60.0 254.95 126.1)"/><rect x="252.15" y="114.80" width="5.6" height="6.56" rx="2.0" transform="rotate(120.0 254.95 126.1)"/><rect x="252.15" y="114.80" width="5.6" height="6.56" rx="2.0" transform="rotate(180.0 254.95 126.1)"/><rect x="252.15" y="114.80" width="5.6" height="6.56" rx="2.0" transform="rotate(240.0 254.95 126.1)"/><rect x="252.15" y="114.80" width="5.6" height="6.56" rx="2.0" transform="rotate(300.0 254.95 126.1)"/></g><circle cx="254.95" cy="126.1" r="4.05" fill="#fff" stroke="#000" stroke-width="1.55"/></svg>
<span class="t" style="left:314px;top:342px;line-height:10px;font-size:8.6px;font-weight:700;color:#3b73d1;font-family:'Liberation Serif',serif">i</span>
<span class="t" style="left:1312.6px;top:187px;line-height:11px;font-size:9.5px;font-weight:700;color:#fdf0d0">?</span>
<span class="t" style="left:519.25px;top:16px;line-height:11px;font-size:10.4px;color:#6f6e6c;letter-spacing:0.336px;">Search...</span>
<span class="t" style="left:54.22px;top:48px;line-height:16px;font-size:14.4px;color:#080707;letter-spacing:0.236px;">Recruiting</span>
<span class="t sf" style="left:148.69px;top:50px;line-height:12px;font-size:10.8px;color:#181818;letter-spacing:0.378px;">Home</span>
<span class="t sf" style="left:197.27px;top:50px;line-height:12px;font-size:10.8px;color:#181818;letter-spacing:0.066px;">Candidates</span>
<span class="t sf" style="left:293.18px;top:50px;line-height:12px;font-size:10.8px;color:#181818;letter-spacing:0.437px;">Jobs</span>
<span class="t sf" style="left:357.33px;top:50px;line-height:12px;font-size:10.8px;color:#181818;letter-spacing:0.246px;">Job Advertising</span>
<span class="t sf" style="left:452.43px;top:50px;line-height:12px;font-size:10.8px;color:#181818;letter-spacing:0.165px;">Locations</span>
<span class="t sf" style="left:539.49px;top:50px;line-height:12px;font-size:10.8px;color:#181818;letter-spacing:0.253px;">Departments</span>
<span class="t sf" style="left:643.56px;top:50px;line-height:12px;font-size:10.8px;color:#181818;letter-spacing:0.030px;">Referral Bonuses</span>
<span class="t sf" style="left:766.81px;top:50px;line-height:12px;font-size:10.8px;color:#181818;letter-spacing:0.070px;">Referrers</span>
<span class="t sf" style="left:853.59px;top:50px;line-height:12px;font-size:10.8px;color:#181818;letter-spacing:-0.010px;">Talents</span>
<span class="t sf" style="left:928.16px;top:50px;line-height:12px;font-size:10.8px;color:#181818;letter-spacing:-0.061px;">Career Page</span>
<span class="t sf" style="left:1007.00px;top:50px;line-height:12px;font-size:10.8px;color:#181818;letter-spacing:0.039px;">Evaluations</span>
<span class="t sf" style="left:1082.31px;top:50px;line-height:12px;font-size:10.8px;color:#181818;letter-spacing:-0.065px;">Career Page Fields</span>
<span class="t sf" style="left:1193.69px;top:50px;line-height:12px;font-size:10.8px;color:#181818;letter-spacing:0.164px;">Recruiting Metrics</span>
<span class="t" style="left:48.10px;top:114px;line-height:12px;font-size:11.2px;color:#706e6b;letter-spacing:-0.118px;">Quick Find</span>
<span class="t sf" style="left:34.14px;top:152px;line-height:12px;font-size:11.2px;color:#181818;letter-spacing:-0.083px;">My Personal Information</span>
<span class="t sf" style="left:54.45px;top:178px;line-height:12px;font-size:11.2px;color:#181818;letter-spacing:-0.176px;">Advanced User Details</span>
<span class="t sf" style="left:54.45px;top:203px;line-height:12px;font-size:11.2px;color:#181818;letter-spacing:-0.093px;">Approver Settings</span>
<span class="t sf" style="left:54.45px;top:229px;line-height:12px;font-size:11.2px;color:#181818;letter-spacing:-0.015px;">Authentication Settings for</span>
<span class="t sf" style="left:53.78px;top:244px;line-height:12px;font-size:11.2px;color:#181818;letter-spacing:-0.162px;">External Systems</span>
<span class="t sf" style="left:53.95px;top:270px;line-height:12px;font-size:11.2px;color:#181818;letter-spacing:-0.247px;">Change My Password</span>
<span class="t sf" style="left:53.98px;top:295px;line-height:12px;font-size:11.2px;color:#181818;letter-spacing:-0.029px;">Connections</span>
<span class="t sf" style="left:53.78px;top:321px;line-height:12px;font-size:11.2px;color:#181818;letter-spacing:-0.117px;">External Credentials</span>
<span class="t sf" style="left:53.96px;top:346px;line-height:12px;font-size:11.2px;color:#181818;letter-spacing:-0.072px;">Grant Account Login Access</span>
<span class="t sf" style="left:53.65px;top:372px;line-height:12px;font-size:11.2px;color:#181818;letter-spacing:-0.131px;">Language &amp; Time Zone</span>
<span class="t sf" style="left:53.78px;top:397px;line-height:12px;font-size:11.2px;color:#181818;letter-spacing:-0.061px;">Login History</span>
<span class="t sf" style="left:53.78px;top:422px;line-height:12px;font-size:11.2px;color:#181818;letter-spacing:-0.101px;">Personal Information</span>
<span class="t sf" style="left:53.82px;top:448px;line-height:12px;font-size:11.2px;color:#181818;letter-spacing:-0.037px;">Security Central</span>
<span class="t sf" style="left:34.14px;top:474px;line-height:12px;font-size:11.2px;color:#181818;letter-spacing:-0.123px;">Display &amp; Layout</span>
<span class="t sf" style="left:34.12px;top:499px;line-height:12px;font-size:11.2px;color:#181818;letter-spacing:-0.302px;">Email</span>
<span class="t sf" style="left:34.60px;top:525px;line-height:12px;font-size:11.2px;color:#181818;letter-spacing:-0.096px;">Chatter</span>
<span class="t sf" style="left:34.56px;top:550px;line-height:12px;font-size:11.2px;color:#181818;letter-spacing:-0.233px;">Calendar &amp; Reminders</span>
<span class="t sf" style="left:34.12px;top:576px;line-height:12px;font-size:11.2px;color:#181818;letter-spacing:0.045px;">Desktop Add-Ons</span>
<span class="t sf" style="left:33.85px;top:601px;line-height:12px;font-size:11.2px;color:#181818;letter-spacing:0.155px;">Import</span>
<span class="t lite" style="left:280.79px;top:114px;line-height:19px;font-size:16.6px;color:#181818;letter-spacing:-0.364px;">Grant Account Login Access</span>
<span class="t" style="left:232.06px;top:186px;line-height:21px;font-size:18.3px;color:#000;letter-spacing:0.060px;">Grant Account Login Access</span>
<span class="t" style="left:232.19px;top:221px;line-height:11px;font-size:9.97px;color:#222;">To assist with support issues, you may grant your administrator or support personnel the ability to login as you and</span>
<span class="t" style="left:737.50px;top:221px;line-height:11px;font-size:9.97px;color:#222;">access your data.</span>
<span class="t" style="left:241.86px;top:253px;line-height:10px;font-size:9.14px;color:#111;letter-spacing:0.106px;">My Username:</span>
<span class="t" style="left:303.90px;top:253px;line-height:10px;font-size:9.14px;color:#000;font-weight:700;letter-spacing:0.037px;">demo+flair-content-team-demo@flair.hr</span>
<span class="t" style="left:246.68px;top:279px;line-height:9px;font-size:8.23px;color:#000;font-weight:700;letter-spacing:0.051px;">Grant Access To</span>
<span class="t" style="left:744.50px;top:279px;line-height:9px;font-size:8.23px;color:#000;font-weight:700;">Access Duration</span>
<span class="t" style="left:246.26px;top:298px;line-height:10px;font-size:9.14px;color:#000;letter-spacing:0.065px;">Your Company&#x27;s Administrator</span>
<span class="t" style="left:246.50px;top:321px;line-height:10px;font-size:9.14px;color:#000;letter-spacing:0.050px;">Salesforce.com Support</span>
<span class="t" style="left:246.79px;top:345px;line-height:10px;font-size:9.14px;color:#000;letter-spacing:0.026px;">flair.hr Support</span>
<span class="t" style="left:574.96px;top:387px;line-height:9px;font-size:8.23px;color:#333;font-weight:700;letter-spacing:0.392px;">Save</span>
<span class="t" style="left:1237.93px;top:191px;line-height:9px;font-size:8.23px;color:#1f5a9e;letter-spacing:0.130px;">Help for this Page</span>
<span class="t" style="left:743.37px;top:342px;line-height:12px;font-size:10.67px;color:#000;letter-spacing:0.123px;">1 Month (exp. 12.02.2023)</span>
<!-- dropdown -->
<svg class="abs" style="left:703px;top:198px" width="222" height="170" viewBox="703 198 222 170">
<defs><filter id="dsh" x="-15%" y="-15%" width="130%" height="140%"><feGaussianBlur stdDeviation="4"/></filter></defs>
<rect x="734.4" y="222.5" width="159.3" height="114" rx="6" fill="#000" opacity="0.26" filter="url(#dsh)"/>
<rect x="733.4" y="218.6" width="161.3" height="115.2" rx="5" fill="#626066"/>
<rect x="733.75" y="218.95" width="160.6" height="114.5" rx="4.7" fill="none" stroke="#77757b" stroke-width="0.7"/>
<rect x="738.1" y="259.3" width="152.1" height="17.2" rx="3.2" fill="#8a888e"/>
<path d="M741.6 304.2 L743.9 306.9 L747.9 300.3" fill="none" stroke="#fff" stroke-width="1.25" stroke-linecap="round" stroke-linejoin="round"/>
</svg>
<span class="t dd" style="left:752.75px;top:226px;line-height:12px;font-size:10.6px;color:#fff;letter-spacing:0.616px;">--No Access--</span>
<span class="t dd" style="left:752.25px;top:244px;line-height:12px;font-size:10.6px;color:#fff;letter-spacing:0.045px;">1 Day (exp. 13.01.2023)</span>
<span class="t dd" style="left:752.52px;top:262px;line-height:12px;font-size:10.6px;color:#fff;letter-spacing:0.098px;">3 Days (exp. 15.01.2023)</span>
<span class="t dd" style="left:752.25px;top:280px;line-height:12px;font-size:10.6px;color:#fff;letter-spacing:0.048px;">1 Week (exp. 19.01.2023)</span>
<span class="t dd" style="left:752.27px;top:298px;line-height:12px;font-size:10.6px;color:#fff;letter-spacing:0.164px;">1 Month (exp. 12.02.2023)</span>
<span class="t dd" style="left:752.25px;top:315px;line-height:12px;font-size:10.6px;color:#fff;letter-spacing:0.040px;">1 Year (exp. 12.01.2024)</span>

<svg class="abs" style="left:280px;top:632px" width="800" height="40" viewBox="0 0 800 40">
<defs><linearGradient id="bsv" x1="0" y1="0" x2="0" y2="1"><stop offset="0" stop-color="#000" stop-opacity="0"/><stop offset="0.5" stop-color="#000" stop-opacity="0.02"/><stop offset="1" stop-color="#000" stop-opacity="0.085"/></linearGradient>
<linearGradient id="bsh" x1="0" y1="0" x2="1" y2="0"><stop offset="0" stop-color="#fff" stop-opacity="0"/><stop offset="0.12" stop-color="#fff" stop-opacity="1"/><stop offset="0.88" stop-color="#fff" stop-opacity="1"/><stop offset="1" stop-color="#fff" stop-opacity="0"/></linearGradient>
<mask id="bsm"><rect x="0" y="0" width="800" height="40" fill="url(#bsh)"/></mask></defs>
<rect x="0" y="0" width="800" height="40" fill="url(#bsv)" mask="url(#bsm)"/>
</svg>
<div class="abs" id="border"></div>
</div>
</body>
</html>
